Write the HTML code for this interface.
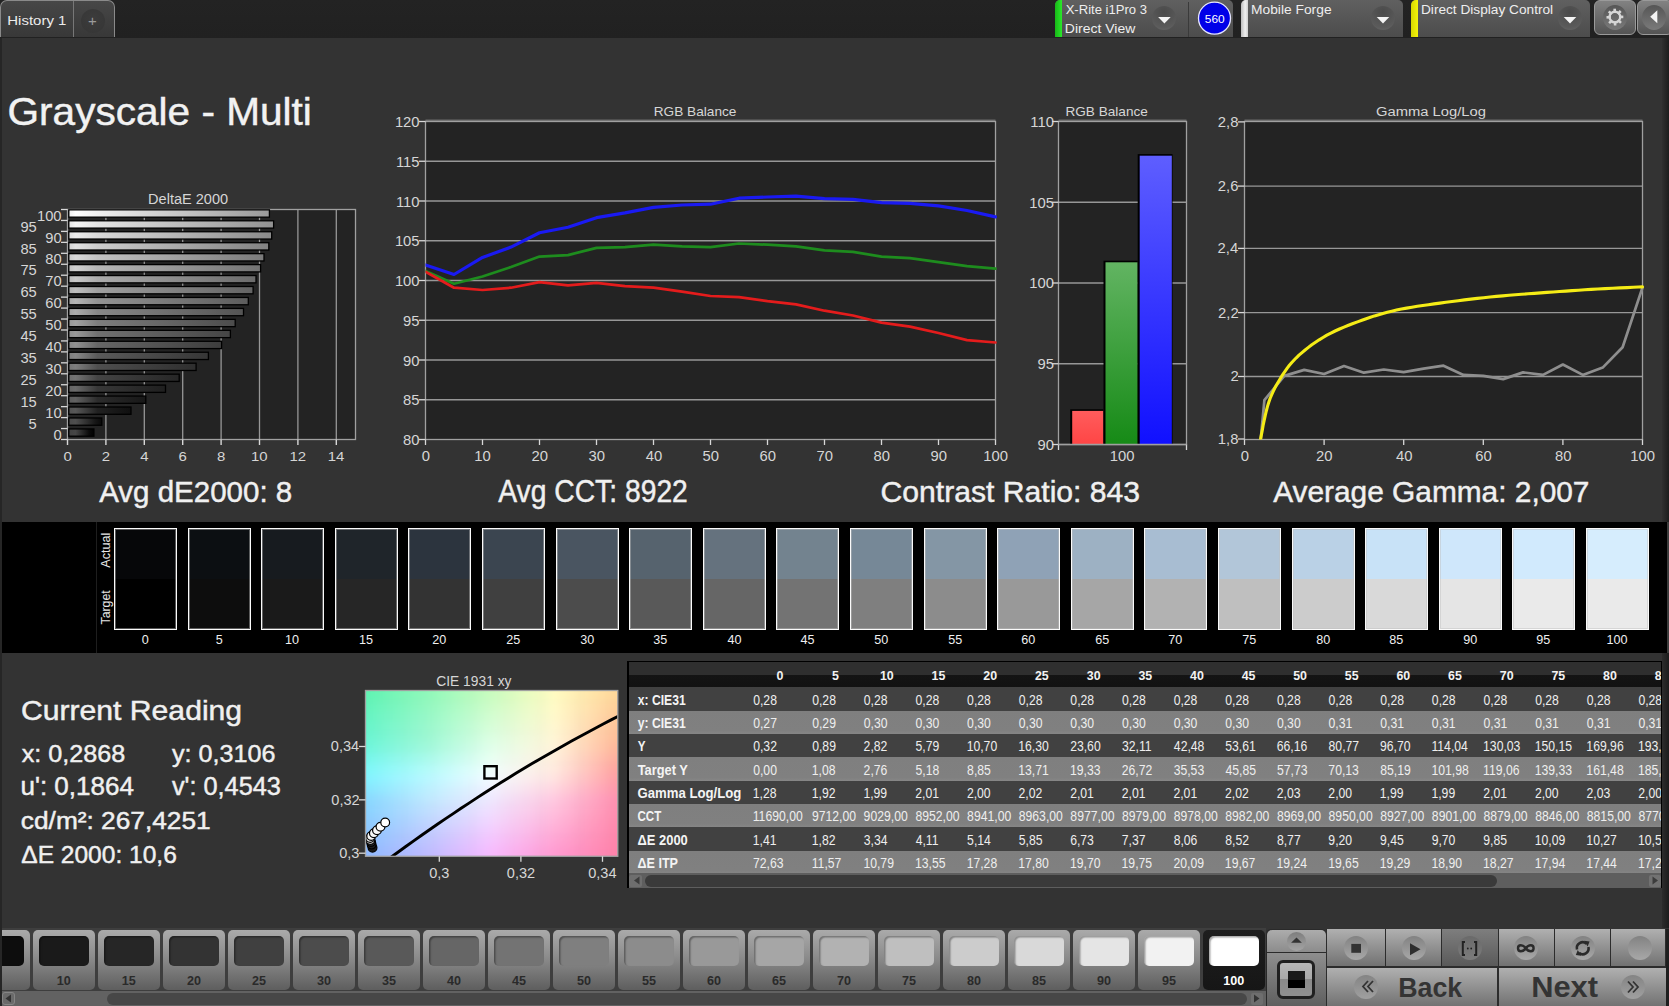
<!DOCTYPE html>
<html><head><meta charset="utf-8">
<style>
html,body{margin:0;padding:0;}
body{width:1669px;height:1006px;overflow:hidden;background:#333333;font-family:"Liberation Sans", sans-serif;position:relative;}
.a{position:absolute;}
svg{position:absolute;left:0;top:0;}
svg text{font-family:"Liberation Sans", sans-serif;}
</style></head><body>
<div class="a" style="left:0;top:0;width:1669px;height:38px;background:linear-gradient(#232323,#212121)"></div><div class="a" style="left:1662px;top:38px;width:7px;height:890px;background:linear-gradient(90deg,#303030,#1d1d1d)"></div><div class="a" style="left:0;top:0;width:115px;height:37px;box-sizing:border-box;border:1px solid #8a8a8a;border-bottom:none;border-radius:7px 7px 0 0;background:linear-gradient(#474747,#383838)"></div><div class="a" style="left:73px;top:1px;width:1px;height:36px;background:#777"></div><div class="a" style="left:81px;top:9px;width:24px;height:24px;border-radius:50%;background:radial-gradient(circle at 50% 40%,#3c3c3c,#353535)"></div><div class="a" style="left:1055px;top:0;width:178px;height:37px;border-radius:5px 5px 0 0;background:linear-gradient(#606060,#4c4c4c)"></div><div class="a" style="left:1055px;top:0;width:7px;height:37px;border-radius:5px 0 0 0;background:linear-gradient(90deg,#18b818,#2ae82a)"></div><div class="a" style="left:1241px;top:0;width:162px;height:37px;border-radius:5px 5px 0 0;background:linear-gradient(#606060,#4c4c4c)"></div><div class="a" style="left:1241px;top:0;width:7px;height:37px;border-radius:5px 0 0 0;background:linear-gradient(90deg,#bdbdbd,#f0f0f0 60%,#cfcfcf)"></div><div class="a" style="left:1411px;top:0;width:179px;height:37px;border-radius:5px 5px 0 0;background:linear-gradient(#606060,#4c4c4c)"></div><div class="a" style="left:1411px;top:0;width:7px;height:37px;border-radius:5px 0 0 0;background:linear-gradient(90deg,#d8d800,#f4f40a)"></div><div class="a" style="left:1188px;top:2px;width:1px;height:35px;background:#3a3a3a"></div><div class="a" style="left:1152.4px;top:6px;width:24px;height:24px;border-radius:50%;background:radial-gradient(circle at 50% 25%,#4a4a4a,#5a5a5a 70%,#6a6a6a)"></div><div class="a" style="left:1371.0px;top:6px;width:24px;height:24px;border-radius:50%;background:radial-gradient(circle at 50% 25%,#4a4a4a,#5a5a5a 70%,#6a6a6a)"></div><div class="a" style="left:1558.0px;top:6px;width:24px;height:24px;border-radius:50%;background:radial-gradient(circle at 50% 25%,#4a4a4a,#5a5a5a 70%,#6a6a6a)"></div><div class="a" style="left:1594px;top:0px;width:42px;height:35px;box-sizing:border-box;border:1px solid #9a9a9a;border-radius:6px;background:linear-gradient(#828282,#545454)"></div><div class="a" style="left:1603px;top:5px;width:24px;height:25px;border-radius:50%;background:linear-gradient(#555,#6c6c6c 60%,#7a7a7a)"></div><div class="a" style="left:1637px;top:0px;width:36px;height:35px;box-sizing:border-box;border:1px solid #9a9a9a;border-radius:6px;background:linear-gradient(#828282,#545454)"></div><div class="a" style="left:1642px;top:5px;width:24px;height:25px;border-radius:50%;background:linear-gradient(#555,#6c6c6c 60%,#7a7a7a)"></div>
<svg width="1669" height="1006" viewBox="0 0 1669 1006"><path d="M1158.1,17 L1170.7,17 L1164.4,23.4 Z" fill="#f4f4f4"/><path d="M1376.7,17 L1389.3,17 L1383.0,23.4 Z" fill="#f4f4f4"/><path d="M1563.7,17 L1576.3,17 L1570.0,23.4 Z" fill="#f4f4f4"/><circle cx="1214.5" cy="18.2" r="16" fill="#0000e8" stroke="#e6e6ff" stroke-width="1.3"/><rect x="1613.40" y="8.70" width="2.6" height="4.2" fill="#d6d6d6" transform="rotate(0 1614.9 17.1)"/><rect x="1613.40" y="8.70" width="2.6" height="4.2" fill="#d6d6d6" transform="rotate(45 1614.9 17.1)"/><rect x="1613.40" y="8.70" width="2.6" height="4.2" fill="#d6d6d6" transform="rotate(90 1614.9 17.1)"/><rect x="1613.40" y="8.70" width="2.6" height="4.2" fill="#d6d6d6" transform="rotate(135 1614.9 17.1)"/><rect x="1613.40" y="8.70" width="2.6" height="4.2" fill="#d6d6d6" transform="rotate(180 1614.9 17.1)"/><rect x="1613.40" y="8.70" width="2.6" height="4.2" fill="#d6d6d6" transform="rotate(225 1614.9 17.1)"/><rect x="1613.40" y="8.70" width="2.6" height="4.2" fill="#d6d6d6" transform="rotate(270 1614.9 17.1)"/><rect x="1613.40" y="8.70" width="2.6" height="4.2" fill="#d6d6d6" transform="rotate(315 1614.9 17.1)"/><circle cx="1614.9" cy="17.1" r="5.3" fill="none" stroke="#d6d6d6" stroke-width="2.4"/><path d="M1657.3,10.2 L1657.3,23.2 L1650.2,16.8 Z" fill="#f4f4f4"/><rect x="67.5" y="209.5" width="288.0" height="230.0" fill="#232323"/><line x1="105.9" y1="209.5" x2="105.9" y2="439.5" stroke="#979797" stroke-width="1.3"/><line x1="144.3" y1="209.5" x2="144.3" y2="439.5" stroke="#979797" stroke-width="1.3"/><line x1="182.7" y1="209.5" x2="182.7" y2="439.5" stroke="#979797" stroke-width="1.3"/><line x1="221.1" y1="209.5" x2="221.1" y2="439.5" stroke="#979797" stroke-width="1.3"/><line x1="259.5" y1="209.5" x2="259.5" y2="439.5" stroke="#979797" stroke-width="1.3"/><line x1="297.9" y1="209.5" x2="297.9" y2="439.5" stroke="#979797" stroke-width="1.3"/><line x1="336.3" y1="209.5" x2="336.3" y2="439.5" stroke="#979797" stroke-width="1.3"/><rect x="67.5" y="209.5" width="288.0" height="230.0" fill="none" stroke="#a0a0a0" stroke-width="1.3"/><rect x="68.8" y="209.85" width="200.6" height="7.3" fill="url(#dg100)" stroke="#000" stroke-width="1.3"/><rect x="68.8" y="220.80" width="204.8" height="7.3" fill="url(#dg95)" stroke="#000" stroke-width="1.3"/><rect x="68.8" y="231.75" width="202.9" height="7.3" fill="url(#dg90)" stroke="#000" stroke-width="1.3"/><rect x="68.8" y="242.71" width="200.0" height="7.3" fill="url(#dg85)" stroke="#000" stroke-width="1.3"/><rect x="68.8" y="253.66" width="195.2" height="7.3" fill="url(#dg80)" stroke="#000" stroke-width="1.3"/><rect x="68.8" y="264.61" width="191.8" height="7.3" fill="url(#dg75)" stroke="#000" stroke-width="1.3"/><rect x="68.8" y="275.56" width="187.2" height="7.3" fill="url(#dg70)" stroke="#000" stroke-width="1.3"/><rect x="68.8" y="286.52" width="184.3" height="7.3" fill="url(#dg65)" stroke="#000" stroke-width="1.3"/><rect x="68.8" y="297.47" width="179.5" height="7.3" fill="url(#dg60)" stroke="#000" stroke-width="1.3"/><rect x="68.8" y="308.42" width="174.7" height="7.3" fill="url(#dg55)" stroke="#000" stroke-width="1.3"/><rect x="68.8" y="319.37" width="166.4" height="7.3" fill="url(#dg50)" stroke="#000" stroke-width="1.3"/><rect x="68.8" y="330.33" width="161.6" height="7.3" fill="url(#dg45)" stroke="#000" stroke-width="1.3"/><rect x="68.8" y="341.28" width="152.8" height="7.3" fill="url(#dg40)" stroke="#000" stroke-width="1.3"/><rect x="68.8" y="352.23" width="139.6" height="7.3" fill="url(#dg35)" stroke="#000" stroke-width="1.3"/><rect x="68.8" y="363.18" width="127.3" height="7.3" fill="url(#dg30)" stroke="#000" stroke-width="1.3"/><rect x="68.8" y="374.14" width="110.4" height="7.3" fill="url(#dg25)" stroke="#000" stroke-width="1.3"/><rect x="68.8" y="385.09" width="96.7" height="7.3" fill="url(#dg20)" stroke="#000" stroke-width="1.3"/><rect x="68.8" y="396.04" width="77.0" height="7.3" fill="url(#dg15)" stroke="#000" stroke-width="1.3"/><rect x="68.8" y="406.99" width="62.2" height="7.3" fill="url(#dg10)" stroke="#000" stroke-width="1.3"/><rect x="68.8" y="417.95" width="33.0" height="7.3" fill="url(#dg5)" stroke="#000" stroke-width="1.3"/><rect x="68.8" y="428.90" width="25.1" height="7.3" fill="url(#dg0)" stroke="#000" stroke-width="1.3"/><defs><linearGradient id="dg100" gradientUnits="userSpaceOnUse" x1="67.5" x2="270.06" y1="0" y2="0"><stop offset="0" stop-color="rgb(235,235,235)"/><stop offset="0.039" stop-color="rgb(255,255,255)"/><stop offset="0.148" stop-color="rgb(240,240,240)"/><stop offset="1" stop-color="rgb(153,153,153)"/></linearGradient><linearGradient id="dg95" gradientUnits="userSpaceOnUse" x1="67.5" x2="274.28" y1="0" y2="0"><stop offset="0" stop-color="rgb(226,226,226)"/><stop offset="0.039" stop-color="rgb(246,246,246)"/><stop offset="0.145" stop-color="rgb(228,228,228)"/><stop offset="1" stop-color="rgb(145,145,145)"/></linearGradient><linearGradient id="dg90" gradientUnits="userSpaceOnUse" x1="67.5" x2="272.36" y1="0" y2="0"><stop offset="0" stop-color="rgb(218,218,218)"/><stop offset="0.039" stop-color="rgb(236,236,236)"/><stop offset="0.146" stop-color="rgb(217,217,217)"/><stop offset="1" stop-color="rgb(138,138,138)"/></linearGradient><linearGradient id="dg85" gradientUnits="userSpaceOnUse" x1="67.5" x2="269.48" y1="0" y2="0"><stop offset="0" stop-color="rgb(209,209,209)"/><stop offset="0.040" stop-color="rgb(227,227,227)"/><stop offset="0.149" stop-color="rgb(205,205,205)"/><stop offset="1" stop-color="rgb(130,130,130)"/></linearGradient><linearGradient id="dg80" gradientUnits="userSpaceOnUse" x1="67.5" x2="264.68" y1="0" y2="0"><stop offset="0" stop-color="rgb(201,201,201)"/><stop offset="0.041" stop-color="rgb(218,218,218)"/><stop offset="0.152" stop-color="rgb(194,194,194)"/><stop offset="1" stop-color="rgb(122,122,122)"/></linearGradient><linearGradient id="dg75" gradientUnits="userSpaceOnUse" x1="67.5" x2="261.23" y1="0" y2="0"><stop offset="0" stop-color="rgb(192,192,192)"/><stop offset="0.041" stop-color="rgb(209,209,209)"/><stop offset="0.155" stop-color="rgb(182,182,182)"/><stop offset="1" stop-color="rgb(115,115,115)"/></linearGradient><linearGradient id="dg70" gradientUnits="userSpaceOnUse" x1="67.5" x2="256.62" y1="0" y2="0"><stop offset="0" stop-color="rgb(184,184,184)"/><stop offset="0.042" stop-color="rgb(200,200,200)"/><stop offset="0.159" stop-color="rgb(171,171,171)"/><stop offset="1" stop-color="rgb(107,107,107)"/></linearGradient><linearGradient id="dg65" gradientUnits="userSpaceOnUse" x1="67.5" x2="253.74" y1="0" y2="0"><stop offset="0" stop-color="rgb(175,175,175)"/><stop offset="0.043" stop-color="rgb(190,190,190)"/><stop offset="0.161" stop-color="rgb(160,160,160)"/><stop offset="1" stop-color="rgb(99,99,99)"/></linearGradient><linearGradient id="dg60" gradientUnits="userSpaceOnUse" x1="67.5" x2="248.94" y1="0" y2="0"><stop offset="0" stop-color="rgb(167,167,167)"/><stop offset="0.044" stop-color="rgb(181,181,181)"/><stop offset="0.165" stop-color="rgb(148,148,148)"/><stop offset="1" stop-color="rgb(92,92,92)"/></linearGradient><linearGradient id="dg55" gradientUnits="userSpaceOnUse" x1="67.5" x2="244.14" y1="0" y2="0"><stop offset="0" stop-color="rgb(158,158,158)"/><stop offset="0.045" stop-color="rgb(172,172,172)"/><stop offset="0.170" stop-color="rgb(136,136,136)"/><stop offset="1" stop-color="rgb(84,84,84)"/></linearGradient><linearGradient id="dg50" gradientUnits="userSpaceOnUse" x1="67.5" x2="235.88" y1="0" y2="0"><stop offset="0" stop-color="rgb(150,150,150)"/><stop offset="0.048" stop-color="rgb(162,162,162)"/><stop offset="0.178" stop-color="rgb(125,125,125)"/><stop offset="1" stop-color="rgb(76,76,76)"/></linearGradient><linearGradient id="dg45" gradientUnits="userSpaceOnUse" x1="67.5" x2="231.08" y1="0" y2="0"><stop offset="0" stop-color="rgb(141,141,141)"/><stop offset="0.049" stop-color="rgb(153,153,153)"/><stop offset="0.183" stop-color="rgb(113,113,113)"/><stop offset="1" stop-color="rgb(69,69,69)"/></linearGradient><linearGradient id="dg40" gradientUnits="userSpaceOnUse" x1="67.5" x2="222.25" y1="0" y2="0"><stop offset="0" stop-color="rgb(132,132,132)"/><stop offset="0.052" stop-color="rgb(144,144,144)"/><stop offset="0.194" stop-color="rgb(102,102,102)"/><stop offset="1" stop-color="rgb(61,61,61)"/></linearGradient><linearGradient id="dg35" gradientUnits="userSpaceOnUse" x1="67.5" x2="209.00" y1="0" y2="0"><stop offset="0" stop-color="rgb(124,124,124)"/><stop offset="0.057" stop-color="rgb(135,135,135)"/><stop offset="0.212" stop-color="rgb(90,90,90)"/><stop offset="1" stop-color="rgb(54,54,54)"/></linearGradient><linearGradient id="dg30" gradientUnits="userSpaceOnUse" x1="67.5" x2="196.72" y1="0" y2="0"><stop offset="0" stop-color="rgb(115,115,115)"/><stop offset="0.062" stop-color="rgb(126,126,126)"/><stop offset="0.232" stop-color="rgb(79,79,79)"/><stop offset="1" stop-color="rgb(46,46,46)"/></linearGradient><linearGradient id="dg25" gradientUnits="userSpaceOnUse" x1="67.5" x2="179.82" y1="0" y2="0"><stop offset="0" stop-color="rgb(107,107,107)"/><stop offset="0.071" stop-color="rgb(116,116,116)"/><stop offset="0.267" stop-color="rgb(68,68,68)"/><stop offset="1" stop-color="rgb(38,38,38)"/></linearGradient><linearGradient id="dg20" gradientUnits="userSpaceOnUse" x1="67.5" x2="166.19" y1="0" y2="0"><stop offset="0" stop-color="rgb(98,98,98)"/><stop offset="0.081" stop-color="rgb(107,107,107)"/><stop offset="0.304" stop-color="rgb(56,56,56)"/><stop offset="1" stop-color="rgb(31,31,31)"/></linearGradient><linearGradient id="dg15" gradientUnits="userSpaceOnUse" x1="67.5" x2="146.41" y1="0" y2="0"><stop offset="0" stop-color="rgb(90,90,90)"/><stop offset="0.101" stop-color="rgb(98,98,98)"/><stop offset="0.380" stop-color="rgb(44,44,44)"/><stop offset="1" stop-color="rgb(23,23,23)"/></linearGradient><linearGradient id="dg10" gradientUnits="userSpaceOnUse" x1="67.5" x2="131.63" y1="0" y2="0"><stop offset="0" stop-color="rgb(81,81,81)"/><stop offset="0.125" stop-color="rgb(88,88,88)"/><stop offset="0.468" stop-color="rgb(33,33,33)"/><stop offset="1" stop-color="rgb(15,15,15)"/></linearGradient><linearGradient id="dg5" gradientUnits="userSpaceOnUse" x1="67.5" x2="102.44" y1="0" y2="0"><stop offset="0" stop-color="rgb(73,73,73)"/><stop offset="0.229" stop-color="rgb(79,79,79)"/><stop offset="0.800" stop-color="rgb(22,22,22)"/><stop offset="1" stop-color="rgb(8,8,8)"/></linearGradient><linearGradient id="dg0" gradientUnits="userSpaceOnUse" x1="67.5" x2="94.57" y1="0" y2="0"><stop offset="0" stop-color="rgb(64,64,64)"/><stop offset="0.296" stop-color="rgb(70,70,70)"/><stop offset="0.800" stop-color="rgb(10,10,10)"/><stop offset="1" stop-color="rgb(0,0,0)"/></linearGradient></defs><line x1="61.0" y1="209.50" x2="67.5" y2="209.50" stroke="#d8d8d8" stroke-width="1.3"/><line x1="61.0" y1="220.45" x2="67.5" y2="220.45" stroke="#d8d8d8" stroke-width="1.3"/><line x1="61.0" y1="231.40" x2="67.5" y2="231.40" stroke="#d8d8d8" stroke-width="1.3"/><line x1="61.0" y1="242.36" x2="67.5" y2="242.36" stroke="#d8d8d8" stroke-width="1.3"/><line x1="61.0" y1="253.31" x2="67.5" y2="253.31" stroke="#d8d8d8" stroke-width="1.3"/><line x1="61.0" y1="264.26" x2="67.5" y2="264.26" stroke="#d8d8d8" stroke-width="1.3"/><line x1="61.0" y1="275.21" x2="67.5" y2="275.21" stroke="#d8d8d8" stroke-width="1.3"/><line x1="61.0" y1="286.17" x2="67.5" y2="286.17" stroke="#d8d8d8" stroke-width="1.3"/><line x1="61.0" y1="297.12" x2="67.5" y2="297.12" stroke="#d8d8d8" stroke-width="1.3"/><line x1="61.0" y1="308.07" x2="67.5" y2="308.07" stroke="#d8d8d8" stroke-width="1.3"/><line x1="61.0" y1="319.02" x2="67.5" y2="319.02" stroke="#d8d8d8" stroke-width="1.3"/><line x1="61.0" y1="329.98" x2="67.5" y2="329.98" stroke="#d8d8d8" stroke-width="1.3"/><line x1="61.0" y1="340.93" x2="67.5" y2="340.93" stroke="#d8d8d8" stroke-width="1.3"/><line x1="61.0" y1="351.88" x2="67.5" y2="351.88" stroke="#d8d8d8" stroke-width="1.3"/><line x1="61.0" y1="362.83" x2="67.5" y2="362.83" stroke="#d8d8d8" stroke-width="1.3"/><line x1="61.0" y1="373.79" x2="67.5" y2="373.79" stroke="#d8d8d8" stroke-width="1.3"/><line x1="61.0" y1="384.74" x2="67.5" y2="384.74" stroke="#d8d8d8" stroke-width="1.3"/><line x1="61.0" y1="395.69" x2="67.5" y2="395.69" stroke="#d8d8d8" stroke-width="1.3"/><line x1="61.0" y1="406.64" x2="67.5" y2="406.64" stroke="#d8d8d8" stroke-width="1.3"/><line x1="61.0" y1="417.60" x2="67.5" y2="417.60" stroke="#d8d8d8" stroke-width="1.3"/><line x1="61.0" y1="428.55" x2="67.5" y2="428.55" stroke="#d8d8d8" stroke-width="1.3"/><line x1="61.0" y1="439.50" x2="67.5" y2="439.50" stroke="#d8d8d8" stroke-width="1.3"/><line x1="67.5" y1="439.5" x2="67.5" y2="445.0" stroke="#d8d8d8" stroke-width="1.4"/><line x1="105.9" y1="439.5" x2="105.9" y2="445.0" stroke="#d8d8d8" stroke-width="1.4"/><line x1="144.3" y1="439.5" x2="144.3" y2="445.0" stroke="#d8d8d8" stroke-width="1.4"/><line x1="182.7" y1="439.5" x2="182.7" y2="445.0" stroke="#d8d8d8" stroke-width="1.4"/><line x1="221.1" y1="439.5" x2="221.1" y2="445.0" stroke="#d8d8d8" stroke-width="1.4"/><line x1="259.5" y1="439.5" x2="259.5" y2="445.0" stroke="#d8d8d8" stroke-width="1.4"/><line x1="297.9" y1="439.5" x2="297.9" y2="445.0" stroke="#d8d8d8" stroke-width="1.4"/><line x1="336.3" y1="439.5" x2="336.3" y2="445.0" stroke="#d8d8d8" stroke-width="1.4"/><rect x="425.5" y="121.5" width="570.0" height="318.0" fill="#232323"/><line x1="425.5" y1="399.75" x2="995.5" y2="399.75" stroke="#979797" stroke-width="1.3"/><line x1="425.5" y1="360.0" x2="995.5" y2="360.0" stroke="#979797" stroke-width="1.3"/><line x1="425.5" y1="320.25" x2="995.5" y2="320.25" stroke="#979797" stroke-width="1.3"/><line x1="425.5" y1="280.5" x2="995.5" y2="280.5" stroke="#979797" stroke-width="1.3"/><line x1="425.5" y1="240.75" x2="995.5" y2="240.75" stroke="#979797" stroke-width="1.3"/><line x1="425.5" y1="201.0" x2="995.5" y2="201.0" stroke="#979797" stroke-width="1.3"/><line x1="425.5" y1="161.25" x2="995.5" y2="161.25" stroke="#979797" stroke-width="1.3"/><rect x="425.5" y="121.5" width="570.0" height="318.0" fill="none" stroke="#a0a0a0" stroke-width="1.3"/><line x1="425.5" y1="120.2" x2="995.5" y2="120.2" stroke="#8a8a8a" stroke-width="1"/><line x1="419.0" y1="439.5" x2="425.5" y2="439.5" stroke="#d8d8d8" stroke-width="1.3"/><line x1="419.0" y1="399.75" x2="425.5" y2="399.75" stroke="#d8d8d8" stroke-width="1.3"/><line x1="419.0" y1="360.0" x2="425.5" y2="360.0" stroke="#d8d8d8" stroke-width="1.3"/><line x1="419.0" y1="320.25" x2="425.5" y2="320.25" stroke="#d8d8d8" stroke-width="1.3"/><line x1="419.0" y1="280.5" x2="425.5" y2="280.5" stroke="#d8d8d8" stroke-width="1.3"/><line x1="419.0" y1="240.75" x2="425.5" y2="240.75" stroke="#d8d8d8" stroke-width="1.3"/><line x1="419.0" y1="201.0" x2="425.5" y2="201.0" stroke="#d8d8d8" stroke-width="1.3"/><line x1="419.0" y1="161.25" x2="425.5" y2="161.25" stroke="#d8d8d8" stroke-width="1.3"/><line x1="419.0" y1="121.5" x2="425.5" y2="121.5" stroke="#d8d8d8" stroke-width="1.3"/><line x1="425.5" y1="439.5" x2="425.5" y2="445.0" stroke="#d8d8d8" stroke-width="1.3"/><line x1="482.5" y1="439.5" x2="482.5" y2="445.0" stroke="#d8d8d8" stroke-width="1.3"/><line x1="539.5" y1="439.5" x2="539.5" y2="445.0" stroke="#d8d8d8" stroke-width="1.3"/><line x1="596.5" y1="439.5" x2="596.5" y2="445.0" stroke="#d8d8d8" stroke-width="1.3"/><line x1="653.5" y1="439.5" x2="653.5" y2="445.0" stroke="#d8d8d8" stroke-width="1.3"/><line x1="710.5" y1="439.5" x2="710.5" y2="445.0" stroke="#d8d8d8" stroke-width="1.3"/><line x1="767.5" y1="439.5" x2="767.5" y2="445.0" stroke="#d8d8d8" stroke-width="1.3"/><line x1="824.5" y1="439.5" x2="824.5" y2="445.0" stroke="#d8d8d8" stroke-width="1.3"/><line x1="881.5" y1="439.5" x2="881.5" y2="445.0" stroke="#d8d8d8" stroke-width="1.3"/><line x1="938.5" y1="439.5" x2="938.5" y2="445.0" stroke="#d8d8d8" stroke-width="1.3"/><line x1="995.5" y1="439.5" x2="995.5" y2="445.0" stroke="#d8d8d8" stroke-width="1.3"/><clipPath id="rclip"><rect x="425.5" y="121.5" width="572.0" height="318.0"/></clipPath><g clip-path="url(#rclip)"><polyline points="425.5,271.0 454.0,283.7 482.5,276.5 511.0,267.0 539.5,256.6 568.0,255.1 596.5,247.9 625.0,247.1 653.5,244.7 682.0,246.3 710.5,247.1 739.0,243.5 767.5,244.7 796.0,246.3 824.5,250.3 853.0,251.9 881.5,256.6 910.0,258.2 938.5,262.2 967.0,266.2 995.5,268.6" fill="none" stroke="#1e8c1e" stroke-width="2.7" stroke-linejoin="round" stroke-linecap="round"/><polyline points="425.5,271.8 454.0,287.7 482.5,290.0 511.0,287.7 539.5,282.1 568.0,285.3 596.5,282.9 625.0,286.1 653.5,287.7 682.0,291.6 710.5,296.0 739.0,297.2 767.5,301.2 796.0,304.4 824.5,310.7 853.0,315.5 881.5,322.6 910.0,326.6 938.5,333.0 967.0,340.1 995.5,342.5" fill="none" stroke="#e41c1c" stroke-width="2.7" stroke-linejoin="round" stroke-linecap="round"/><polyline points="425.5,265.0 454.0,274.5 482.5,257.4 511.0,247.1 539.5,232.8 568.0,227.2 596.5,217.7 625.0,212.9 653.5,207.4 682.0,205.0 710.5,204.2 739.0,198.2 767.5,197.0 796.0,196.2 824.5,198.6 853.0,199.4 881.5,202.6 910.0,203.4 938.5,205.8 967.0,210.5 995.5,216.9" fill="none" stroke="#1a1af2" stroke-width="3.2" stroke-linejoin="round" stroke-linecap="round"/></g><defs><linearGradient id="gg" x1="0" x2="0" y1="0" y2="1"><stop offset="0" stop-color="#62b462"/><stop offset="1" stop-color="#168a16"/></linearGradient><linearGradient id="bg" x1="0" x2="0" y1="0" y2="1"><stop offset="0" stop-color="#5e5eff"/><stop offset="1" stop-color="#1010ff"/></linearGradient><linearGradient id="rg" x1="0" x2="0" y1="0" y2="1"><stop offset="0" stop-color="#ff5c5c"/><stop offset="1" stop-color="#ff4545"/></linearGradient></defs><rect x="1058.5" y="121.5" width="128.0" height="323.0" fill="#232323"/><line x1="1058.5" y1="363.75" x2="1186.5" y2="363.75" stroke="#979797" stroke-width="1.3"/><line x1="1058.5" y1="283.0" x2="1186.5" y2="283.0" stroke="#979797" stroke-width="1.3"/><line x1="1058.5" y1="202.25" x2="1186.5" y2="202.25" stroke="#979797" stroke-width="1.3"/><rect x="1058.5" y="121.5" width="128.0" height="323.0" fill="none" stroke="#a0a0a0" stroke-width="1.3"/><line x1="1058.5" y1="120.2" x2="1186.5" y2="120.2" stroke="#8a8a8a" stroke-width="1"/><line x1="1052.0" y1="444.5" x2="1058.5" y2="444.5" stroke="#d8d8d8" stroke-width="1.3"/><line x1="1052.0" y1="363.75" x2="1058.5" y2="363.75" stroke="#d8d8d8" stroke-width="1.3"/><line x1="1052.0" y1="283.0" x2="1058.5" y2="283.0" stroke="#d8d8d8" stroke-width="1.3"/><line x1="1052.0" y1="202.25" x2="1058.5" y2="202.25" stroke="#d8d8d8" stroke-width="1.3"/><line x1="1052.0" y1="121.5" x2="1058.5" y2="121.5" stroke="#d8d8d8" stroke-width="1.3"/><line x1="1058.5" y1="444.5" x2="1058.5" y2="450.0" stroke="#d8d8d8" stroke-width="1.3"/><line x1="1186.5" y1="444.5" x2="1186.5" y2="450.0" stroke="#d8d8d8" stroke-width="1.3"/><rect x="1070.2" y="409.3" width="33.1" height="35.2" fill="#000"/><rect x="1072.2" y="410.9" width="31.1" height="33.6" fill="url(#rg)"/><rect x="1103.5" y="260.7" width="34.1" height="183.8" fill="#000"/><rect x="1105.5" y="262.3" width="32.1" height="182.2" fill="url(#gg)"/><rect x="1137.7" y="154.1" width="34.8" height="290.4" fill="#000"/><rect x="1139.7" y="155.7" width="32.1" height="288.8" fill="url(#bg)"/><line x1="1058.5" y1="444.5" x2="1186.5" y2="444.5" stroke="#a0a0a0" stroke-width="1.3"/><rect x="1244.5" y="121.5" width="398.0" height="318.0" fill="#232323"/><line x1="1244.5" y1="376.50" x2="1642.5" y2="376.50" stroke="#979797" stroke-width="1.3"/><line x1="1244.5" y1="312.60" x2="1642.5" y2="312.60" stroke="#979797" stroke-width="1.3"/><line x1="1244.5" y1="248.40" x2="1642.5" y2="248.40" stroke="#979797" stroke-width="1.3"/><line x1="1244.5" y1="186.10" x2="1642.5" y2="186.10" stroke="#979797" stroke-width="1.3"/><rect x="1244.5" y="121.5" width="398.0" height="318.0" fill="none" stroke="#a0a0a0" stroke-width="1.3"/><line x1="1244.5" y1="120.2" x2="1642.5" y2="120.2" stroke="#8a8a8a" stroke-width="1"/><line x1="1238.0" y1="439.00" x2="1244.5" y2="439.00" stroke="#d8d8d8" stroke-width="1.3"/><line x1="1238.0" y1="376.50" x2="1244.5" y2="376.50" stroke="#d8d8d8" stroke-width="1.3"/><line x1="1238.0" y1="312.60" x2="1244.5" y2="312.60" stroke="#d8d8d8" stroke-width="1.3"/><line x1="1238.0" y1="248.40" x2="1244.5" y2="248.40" stroke="#d8d8d8" stroke-width="1.3"/><line x1="1238.0" y1="186.10" x2="1244.5" y2="186.10" stroke="#d8d8d8" stroke-width="1.3"/><line x1="1238.0" y1="121.90" x2="1244.5" y2="121.90" stroke="#d8d8d8" stroke-width="1.3"/><line x1="1244.5" y1="439.5" x2="1244.5" y2="445.0" stroke="#d8d8d8" stroke-width="1.3"/><line x1="1324.1" y1="439.5" x2="1324.1" y2="445.0" stroke="#d8d8d8" stroke-width="1.3"/><line x1="1403.7" y1="439.5" x2="1403.7" y2="445.0" stroke="#d8d8d8" stroke-width="1.3"/><line x1="1483.3" y1="439.5" x2="1483.3" y2="445.0" stroke="#d8d8d8" stroke-width="1.3"/><line x1="1562.9" y1="439.5" x2="1562.9" y2="445.0" stroke="#d8d8d8" stroke-width="1.3"/><line x1="1642.5" y1="439.5" x2="1642.5" y2="445.0" stroke="#d8d8d8" stroke-width="1.3"/><clipPath id="gclip"><rect x="1244.5" y="121.5" width="400.0" height="318.0"/></clipPath><g clip-path="url(#gclip)"><polyline points="1260.7,439.5 1264.4,400.1 1284.3,375.9 1304.2,369.9 1324.1,374.0 1344.0,366.0 1363.9,372.7 1383.8,369.5 1403.7,372.1 1423.6,368.6 1443.5,365.7 1463.4,374.9 1483.3,375.9 1503.2,379.1 1523.1,372.4 1543.0,374.9 1562.9,364.5 1582.8,374.9 1602.7,367.6 1622.6,347.3 1642.5,287.5" fill="none" stroke="#8e8e8e" stroke-width="2.7" stroke-linejoin="round" stroke-linecap="round"/><polyline points="1258.8,455.4 1258.9,454.2 1259.0,452.7 1259.2,450.9 1259.3,448.9 1259.5,446.6 1259.9,444.0 1260.3,441.1 1260.8,437.9 1261.5,434.3 1262.3,430.1 1263.1,425.5 1264.1,420.6 1265.2,415.7 1266.3,411.0 1267.5,406.4 1268.8,402.3 1270.1,398.5 1271.6,395.0 1273.1,391.6 1274.7,388.3 1276.3,385.2 1278.1,382.2 1279.9,379.2 1281.7,376.2 1283.6,373.3 1285.5,370.6 1287.4,367.9 1289.4,365.3 1291.6,362.8 1293.9,360.3 1296.3,357.8 1299.0,355.2 1302.0,352.6 1305.1,350.0 1308.4,347.4 1311.8,344.8 1315.5,342.3 1319.2,339.8 1323.0,337.5 1326.9,335.2 1330.9,333.1 1335.1,331.0 1339.5,329.0 1344.0,327.1 1348.5,325.3 1353.0,323.5 1357.5,321.9 1361.9,320.3 1366.2,318.7 1370.4,317.3 1374.5,315.9 1378.7,314.7 1382.9,313.4 1387.3,312.3 1391.8,311.2 1396.5,310.1 1401.5,309.0 1406.6,308.1 1411.9,307.2 1417.3,306.3 1422.8,305.5 1428.4,304.7 1434.1,303.9 1439.9,303.1 1445.9,302.3 1452.0,301.5 1458.2,300.7 1464.5,299.9 1470.9,299.1 1477.3,298.4 1483.7,297.7 1490.1,297.0 1496.4,296.4 1502.7,295.9 1509.0,295.3 1515.3,294.8 1521.6,294.3 1528.0,293.8 1534.3,293.4 1540.6,292.9 1546.9,292.4 1553.2,292.0 1559.5,291.5 1565.8,291.1 1572.1,290.6 1578.5,290.2 1584.8,289.8 1591.2,289.4 1597.9,289.0 1605.1,288.6 1612.6,288.3 1620.0,287.9 1627.0,287.6 1633.3,287.3 1638.5,287.0 1642.5,286.9" fill="none" stroke="#f5ec16" stroke-width="3.1" stroke-linejoin="round" stroke-linecap="round"/></g></svg>
<div class="a" style="left:0;top:522px;width:1669px;height:131px;background:#000"></div><div class="a" style="left:0;top:38px;width:2px;height:890px;background:#262626"></div><div class="a" style="left:96px;top:522px;width:1px;height:131px;background:#1e1e1e"></div><div class="a" style="left:1667px;top:522px;width:2px;height:131px;background:#3c3c3c"></div><div class="a" style="left:114px;top:528px;width:63px;height:102px;box-sizing:border-box;border:1.4px solid #fafafa;box-shadow:inset 0 0 0 1px rgba(190,190,190,0.45);background:linear-gradient(#060709 0,#060709 50%,rgb(0,0,0) 50%)"></div><div class="a" style="left:188px;top:528px;width:63px;height:102px;box-sizing:border-box;border:1.4px solid #fafafa;box-shadow:inset 0 0 0 1px rgba(190,190,190,0.45);background:linear-gradient(#0c0f12 0,#0c0f12 50%,rgb(13,13,13) 50%)"></div><div class="a" style="left:261px;top:528px;width:63px;height:102px;box-sizing:border-box;border:1.4px solid #fafafa;box-shadow:inset 0 0 0 1px rgba(190,190,190,0.45);background:linear-gradient(#171b1f 0,#171b1f 50%,rgb(26,26,26) 50%)"></div><div class="a" style="left:335px;top:528px;width:63px;height:102px;box-sizing:border-box;border:1.4px solid #fafafa;box-shadow:inset 0 0 0 1px rgba(190,190,190,0.45);background:linear-gradient(#1f252a 0,#1f252a 50%,rgb(38,38,38) 50%)"></div><div class="a" style="left:408px;top:528px;width:63px;height:102px;box-sizing:border-box;border:1.4px solid #fafafa;box-shadow:inset 0 0 0 1px rgba(190,190,190,0.45);background:linear-gradient(#2c343e 0,#2c343e 50%,rgb(51,51,51) 50%)"></div><div class="a" style="left:482px;top:528px;width:63px;height:102px;box-sizing:border-box;border:1.4px solid #fafafa;box-shadow:inset 0 0 0 1px rgba(190,190,190,0.45);background:linear-gradient(#3b4550 0,#3b4550 50%,rgb(64,64,64) 50%)"></div><div class="a" style="left:556px;top:528px;width:63px;height:102px;box-sizing:border-box;border:1.4px solid #fafafa;box-shadow:inset 0 0 0 1px rgba(190,190,190,0.45);background:linear-gradient(#4a5561 0,#4a5561 50%,rgb(76,76,76) 50%)"></div><div class="a" style="left:629px;top:528px;width:63px;height:102px;box-sizing:border-box;border:1.4px solid #fafafa;box-shadow:inset 0 0 0 1px rgba(190,190,190,0.45);background:linear-gradient(#56636e 0,#56636e 50%,rgb(89,89,89) 50%)"></div><div class="a" style="left:703px;top:528px;width:63px;height:102px;box-sizing:border-box;border:1.4px solid #fafafa;box-shadow:inset 0 0 0 1px rgba(190,190,190,0.45);background:linear-gradient(#65727e 0,#65727e 50%,rgb(102,102,102) 50%)"></div><div class="a" style="left:776px;top:528px;width:63px;height:102px;box-sizing:border-box;border:1.4px solid #fafafa;box-shadow:inset 0 0 0 1px rgba(190,190,190,0.45);background:linear-gradient(#73838f 0,#73838f 50%,rgb(115,115,115) 50%)"></div><div class="a" style="left:850px;top:528px;width:63px;height:102px;box-sizing:border-box;border:1.4px solid #fafafa;box-shadow:inset 0 0 0 1px rgba(190,190,190,0.45);background:linear-gradient(#768897 0,#768897 50%,rgb(127,127,127) 50%)"></div><div class="a" style="left:924px;top:528px;width:63px;height:102px;box-sizing:border-box;border:1.4px solid #fafafa;box-shadow:inset 0 0 0 1px rgba(190,190,190,0.45);background:linear-gradient(#8496a5 0,#8496a5 50%,rgb(140,140,140) 50%)"></div><div class="a" style="left:997px;top:528px;width:63px;height:102px;box-sizing:border-box;border:1.4px solid #fafafa;box-shadow:inset 0 0 0 1px rgba(190,190,190,0.45);background:linear-gradient(#8fa2b6 0,#8fa2b6 50%,rgb(153,153,153) 50%)"></div><div class="a" style="left:1071px;top:528px;width:63px;height:102px;box-sizing:border-box;border:1.4px solid #fafafa;box-shadow:inset 0 0 0 1px rgba(190,190,190,0.45);background:linear-gradient(#9db1c3 0,#9db1c3 50%,rgb(166,166,166) 50%)"></div><div class="a" style="left:1144px;top:528px;width:63px;height:102px;box-sizing:border-box;border:1.4px solid #fafafa;box-shadow:inset 0 0 0 1px rgba(190,190,190,0.45);background:linear-gradient(#a8bdd2 0,#a8bdd2 50%,rgb(178,178,178) 50%)"></div><div class="a" style="left:1218px;top:528px;width:63px;height:102px;box-sizing:border-box;border:1.4px solid #fafafa;box-shadow:inset 0 0 0 1px rgba(190,190,190,0.45);background:linear-gradient(#b2c6d9 0,#b2c6d9 50%,rgb(191,191,191) 50%)"></div><div class="a" style="left:1292px;top:528px;width:63px;height:102px;box-sizing:border-box;border:1.4px solid #fafafa;box-shadow:inset 0 0 0 1px rgba(190,190,190,0.45);background:linear-gradient(#bad1e6 0,#bad1e6 50%,rgb(204,204,204) 50%)"></div><div class="a" style="left:1365px;top:528px;width:63px;height:102px;box-sizing:border-box;border:1.4px solid #fafafa;box-shadow:inset 0 0 0 1px rgba(190,190,190,0.45);background:linear-gradient(#c8e2f7 0,#c8e2f7 50%,rgb(217,217,217) 50%)"></div><div class="a" style="left:1439px;top:528px;width:63px;height:102px;box-sizing:border-box;border:1.4px solid #fafafa;box-shadow:inset 0 0 0 1px rgba(190,190,190,0.45);background:linear-gradient(#cfe7fb 0,#cfe7fb 50%,rgb(229,229,229) 50%)"></div><div class="a" style="left:1512px;top:528px;width:63px;height:102px;box-sizing:border-box;border:1.4px solid #fafafa;box-shadow:inset 0 0 0 1px rgba(190,190,190,0.45);background:linear-gradient(#d1eafd 0,#d1eafd 50%,rgb(234,234,234) 50%)"></div><div class="a" style="left:1586px;top:528px;width:63px;height:102px;box-sizing:border-box;border:1.4px solid #fafafa;box-shadow:inset 0 0 0 1px rgba(190,190,190,0.45);background:linear-gradient(#d6edfd 0,#d6edfd 50%,rgb(234,234,234) 50%)"></div><div class="a" style="left:627px;top:661px;width:1035px;height:227px;background:#000"></div><div class="a" style="left:1662px;top:653px;width:7px;height:275px;background:linear-gradient(90deg,#2c2c2c,#1c1c1c)"></div><div class="a" style="left:629px;top:662px;width:1032px;height:25.2px;background:linear-gradient(#2f2f2f 0,#2f2f2f 52%,#141414 52%,#121212 100%)"></div><div class="a" style="left:629px;top:687.20px;width:1032px;height:23.44px;background:#414141"></div><div class="a" style="left:629px;top:710.54px;width:1032px;height:23.44px;background:linear-gradient(#7f7f7f,#808080 85%,#868686)"></div><div class="a" style="left:629px;top:733.88px;width:1032px;height:23.44px;background:#414141"></div><div class="a" style="left:629px;top:757.22px;width:1032px;height:23.44px;background:linear-gradient(#7f7f7f,#808080 85%,#868686)"></div><div class="a" style="left:629px;top:780.56px;width:1032px;height:23.44px;background:#414141"></div><div class="a" style="left:629px;top:803.90px;width:1032px;height:23.44px;background:linear-gradient(#7f7f7f,#808080 85%,#868686)"></div><div class="a" style="left:629px;top:827.24px;width:1032px;height:23.44px;background:#414141"></div><div class="a" style="left:629px;top:850.58px;width:1032px;height:23.44px;background:linear-gradient(#7f7f7f,#808080 85%,#868686)"></div><div class="a" style="left:629px;top:873.3px;width:1032px;height:14.7px;background:#5e5e5e"></div><div class="a" style="left:645px;top:874.5px;width:852px;height:12px;border-radius:6px;background:#3a3a3a"></div><div class="a" style="left:629px;top:874.5px;width:13px;height:12px;border-radius:2px;background:#6e6e6e"></div><div class="a" style="left:1649px;top:874.8px;width:11.5px;height:12px;border-radius:2px;background:#727272"></div><div class="a" style="left:0;top:928px;width:1266px;height:63px;background:#3e3e3e"></div><div class="a" style="left:-32.3px;top:929.8px;width:62.4px;height:60.3px;border-radius:5px;background:linear-gradient(#aaaaaa,#8c8c8c 45%,#5e5e5e)"></div><div class="a" style="left:-25.9px;top:935.8px;width:49.6px;height:29.9px;border-radius:5px;background:rgb(13,13,13);box-shadow:inset 1.5px 1.5px 1.5px rgba(0,0,0,0.35)"></div><div class="a" style="left:32.7px;top:929.8px;width:62.4px;height:60.3px;border-radius:5px;background:linear-gradient(#aaaaaa,#8c8c8c 45%,#5e5e5e)"></div><div class="a" style="left:39.1px;top:935.8px;width:49.6px;height:29.9px;border-radius:5px;background:rgb(26,26,26);box-shadow:inset 1.5px 1.5px 1.5px rgba(0,0,0,0.35)"></div><div class="a" style="left:97.7px;top:929.8px;width:62.4px;height:60.3px;border-radius:5px;background:linear-gradient(#aaaaaa,#8c8c8c 45%,#5e5e5e)"></div><div class="a" style="left:104.1px;top:935.8px;width:49.6px;height:29.9px;border-radius:5px;background:rgb(38,38,38);box-shadow:inset 1.5px 1.5px 1.5px rgba(0,0,0,0.35)"></div><div class="a" style="left:162.7px;top:929.8px;width:62.4px;height:60.3px;border-radius:5px;background:linear-gradient(#aaaaaa,#8c8c8c 45%,#5e5e5e)"></div><div class="a" style="left:169.1px;top:935.8px;width:49.6px;height:29.9px;border-radius:5px;background:rgb(51,51,51);box-shadow:inset 1.5px 1.5px 1.5px rgba(0,0,0,0.35)"></div><div class="a" style="left:227.7px;top:929.8px;width:62.4px;height:60.3px;border-radius:5px;background:linear-gradient(#aaaaaa,#8c8c8c 45%,#5e5e5e)"></div><div class="a" style="left:234.1px;top:935.8px;width:49.6px;height:29.9px;border-radius:5px;background:rgb(64,64,64);box-shadow:inset 1.5px 1.5px 1.5px rgba(0,0,0,0.35)"></div><div class="a" style="left:292.7px;top:929.8px;width:62.4px;height:60.3px;border-radius:5px;background:linear-gradient(#aaaaaa,#8c8c8c 45%,#5e5e5e)"></div><div class="a" style="left:299.1px;top:935.8px;width:49.6px;height:29.9px;border-radius:5px;background:rgb(76,76,76);box-shadow:inset 1.5px 1.5px 1.5px rgba(0,0,0,0.35)"></div><div class="a" style="left:357.7px;top:929.8px;width:62.4px;height:60.3px;border-radius:5px;background:linear-gradient(#aaaaaa,#8c8c8c 45%,#5e5e5e)"></div><div class="a" style="left:364.1px;top:935.8px;width:49.6px;height:29.9px;border-radius:5px;background:rgb(89,89,89);box-shadow:inset 1.5px 1.5px 1.5px rgba(0,0,0,0.35)"></div><div class="a" style="left:422.7px;top:929.8px;width:62.4px;height:60.3px;border-radius:5px;background:linear-gradient(#aaaaaa,#8c8c8c 45%,#5e5e5e)"></div><div class="a" style="left:429.1px;top:935.8px;width:49.6px;height:29.9px;border-radius:5px;background:rgb(102,102,102);box-shadow:inset 1.5px 1.5px 1.5px rgba(0,0,0,0.35)"></div><div class="a" style="left:487.7px;top:929.8px;width:62.4px;height:60.3px;border-radius:5px;background:linear-gradient(#aaaaaa,#8c8c8c 45%,#5e5e5e)"></div><div class="a" style="left:494.1px;top:935.8px;width:49.6px;height:29.9px;border-radius:5px;background:rgb(115,115,115);box-shadow:inset 1.5px 1.5px 1.5px rgba(0,0,0,0.35)"></div><div class="a" style="left:552.7px;top:929.8px;width:62.4px;height:60.3px;border-radius:5px;background:linear-gradient(#aaaaaa,#8c8c8c 45%,#5e5e5e)"></div><div class="a" style="left:559.1px;top:935.8px;width:49.6px;height:29.9px;border-radius:5px;background:rgb(127,127,127);box-shadow:inset 1.5px 1.5px 1.5px rgba(0,0,0,0.35)"></div><div class="a" style="left:617.7px;top:929.8px;width:62.4px;height:60.3px;border-radius:5px;background:linear-gradient(#aaaaaa,#8c8c8c 45%,#5e5e5e)"></div><div class="a" style="left:624.1px;top:935.8px;width:49.6px;height:29.9px;border-radius:5px;background:rgb(140,140,140);box-shadow:inset 1.5px 1.5px 1.5px rgba(0,0,0,0.35)"></div><div class="a" style="left:682.7px;top:929.8px;width:62.4px;height:60.3px;border-radius:5px;background:linear-gradient(#aaaaaa,#8c8c8c 45%,#5e5e5e)"></div><div class="a" style="left:689.1px;top:935.8px;width:49.6px;height:29.9px;border-radius:5px;background:rgb(153,153,153);box-shadow:inset 1.5px 1.5px 1.5px rgba(0,0,0,0.35)"></div><div class="a" style="left:747.7px;top:929.8px;width:62.4px;height:60.3px;border-radius:5px;background:linear-gradient(#aaaaaa,#8c8c8c 45%,#5e5e5e)"></div><div class="a" style="left:754.1px;top:935.8px;width:49.6px;height:29.9px;border-radius:5px;background:rgb(166,166,166);box-shadow:inset 1.5px 1.5px 1.5px rgba(0,0,0,0.35)"></div><div class="a" style="left:812.7px;top:929.8px;width:62.4px;height:60.3px;border-radius:5px;background:linear-gradient(#aaaaaa,#8c8c8c 45%,#5e5e5e)"></div><div class="a" style="left:819.1px;top:935.8px;width:49.6px;height:29.9px;border-radius:5px;background:rgb(178,178,178);box-shadow:inset 1.5px 1.5px 1.5px rgba(0,0,0,0.35)"></div><div class="a" style="left:877.7px;top:929.8px;width:62.4px;height:60.3px;border-radius:5px;background:linear-gradient(#aaaaaa,#8c8c8c 45%,#5e5e5e)"></div><div class="a" style="left:884.1px;top:935.8px;width:49.6px;height:29.9px;border-radius:5px;background:rgb(191,191,191);box-shadow:inset 1.5px 1.5px 1.5px rgba(0,0,0,0.35)"></div><div class="a" style="left:942.7px;top:929.8px;width:62.4px;height:60.3px;border-radius:5px;background:linear-gradient(#aaaaaa,#8c8c8c 45%,#5e5e5e)"></div><div class="a" style="left:949.1px;top:935.8px;width:49.6px;height:29.9px;border-radius:5px;background:rgb(204,204,204);box-shadow:inset 1.5px 1.5px 1.5px rgba(0,0,0,0.35)"></div><div class="a" style="left:1007.7px;top:929.8px;width:62.4px;height:60.3px;border-radius:5px;background:linear-gradient(#aaaaaa,#8c8c8c 45%,#5e5e5e)"></div><div class="a" style="left:1014.1px;top:935.8px;width:49.6px;height:29.9px;border-radius:5px;background:rgb(217,217,217);box-shadow:inset 1.5px 1.5px 1.5px rgba(0,0,0,0.35)"></div><div class="a" style="left:1072.7px;top:929.8px;width:62.4px;height:60.3px;border-radius:5px;background:linear-gradient(#aaaaaa,#8c8c8c 45%,#5e5e5e)"></div><div class="a" style="left:1079.1px;top:935.8px;width:49.6px;height:29.9px;border-radius:5px;background:rgb(229,229,229);box-shadow:inset 1.5px 1.5px 1.5px rgba(0,0,0,0.35)"></div><div class="a" style="left:1137.7px;top:929.8px;width:62.4px;height:60.3px;border-radius:5px;background:linear-gradient(#aaaaaa,#8c8c8c 45%,#5e5e5e)"></div><div class="a" style="left:1144.1px;top:935.8px;width:49.6px;height:29.9px;border-radius:5px;background:rgb(242,242,242);box-shadow:inset 1.5px 1.5px 1.5px rgba(0,0,0,0.35)"></div><div class="a" style="left:1202.7px;top:929.8px;width:62.4px;height:60.3px;border-radius:5px;background:linear-gradient(#1e1e1e,#161616)"></div><div class="a" style="left:1209.1px;top:935.8px;width:49.6px;height:29.9px;border-radius:5px;background:rgb(255,255,255);box-shadow:inset 1.5px 1.5px 1.5px rgba(0,0,0,0.35)"></div><div class="a" style="left:0;top:991px;width:1266px;height:15px;background:#626262"></div><div class="a" style="left:107px;top:993px;width:1140px;height:12px;border-radius:6px;background:#474747"></div><div class="a" style="left:2px;top:992px;width:13px;height:13px;box-sizing:border-box;border:1px solid #858585;border-radius:3px;background:#6a6a6a"></div><div class="a" style="left:0;top:928px;width:1.5px;height:78px;background:#262626"></div><div class="a" style="left:1251px;top:992.5px;width:12px;height:12px;border-radius:2px;background:#6e6e6e"></div><div class="a" style="left:1266px;top:929.3px;width:60.2px;height:77px;border-radius:5px 5px 0 0;background:#2a2a2a"></div><div class="a" style="left:1266.5px;top:929.5px;width:59.2px;height:22px;border-radius:5px 5px 0 0;background:linear-gradient(#acacac,#8c8c8c)"></div><div class="a" style="left:1266.5px;top:952.5px;width:59.2px;height:54px;background:linear-gradient(#8e8e8e,#5e5e5e)"></div><div class="a" style="left:1287px;top:931.5px;width:19px;height:19px;border-radius:50%;background:linear-gradient(#7e7e7e,#a4a4a4)"></div><div class="a" style="left:1276.6px;top:960px;width:38.8px;height:38.9px;box-sizing:border-box;border:3.2px solid #202020;border-radius:6px;background:linear-gradient(#b8b8b8 0,#a8a8a8 50%,#8a8a8a 50%,#909090)"></div><div class="a" style="left:1287.9px;top:970.8px;width:17.2px;height:17.3px;background:linear-gradient(#1a1a1a 0,#1a1a1a 50%,#000 50%)"></div><div class="a" style="left:1326.2px;top:928.8px;width:343px;height:77.2px;background:#2c2c2c"></div><div class="a" style="left:1327.3px;top:929.2px;width:57.5px;height:37px;background:linear-gradient(#b0b0b0,#727272)"></div><div class="a" style="left:1343.8px;top:936.3px;width:24px;height:24px;border-radius:50%;background:linear-gradient(#828282,#a8a8a8)"></div><div class="a" style="left:1386.0px;top:929.2px;width:54.8px;height:37px;background:linear-gradient(#b0b0b0,#727272)"></div><div class="a" style="left:1401.5px;top:936.3px;width:24px;height:24px;border-radius:50%;background:linear-gradient(#828282,#a8a8a8)"></div><div class="a" style="left:1442.0px;top:929.2px;width:55.8px;height:37px;background:linear-gradient(#7e7e7e,#5a5a5a)"></div><div class="a" style="left:1457.5px;top:936.3px;width:24px;height:24px;border-radius:50%;background:linear-gradient(#6a6a6a,#7c7c7c)"></div><div class="a" style="left:1499.0px;top:929.2px;width:54.7px;height:37px;background:linear-gradient(#b0b0b0,#727272)"></div><div class="a" style="left:1513.8px;top:936.3px;width:24px;height:24px;border-radius:50%;background:linear-gradient(#828282,#a8a8a8)"></div><div class="a" style="left:1554.9px;top:929.2px;width:54.9px;height:37px;background:linear-gradient(#b0b0b0,#727272)"></div><div class="a" style="left:1570.7px;top:936.3px;width:24px;height:24px;border-radius:50%;background:linear-gradient(#828282,#a8a8a8)"></div><div class="a" style="left:1611.0px;top:929.2px;width:54.2px;height:37px;background:linear-gradient(#b0b0b0,#727272)"></div><div class="a" style="left:1627.6px;top:936.3px;width:24px;height:24px;border-radius:50%;background:linear-gradient(#828282,#a8a8a8)"></div><div class="a" style="left:1666.4px;top:928.8px;width:2.6px;height:77.2px;background:#1e1e1e"></div><div class="a" style="left:1327.3px;top:967.8px;width:170.1px;height:38.2px;background:linear-gradient(#b0b0b0,#727272)"></div><div class="a" style="left:1499px;top:967.8px;width:167.4px;height:38.2px;background:linear-gradient(#b0b0b0,#727272)"></div><div class="a" style="left:1354.1px;top:974.5px;width:24px;height:24px;border-radius:50%;background:linear-gradient(#848484,#a0a0a0)"></div><div class="a" style="left:1620.8px;top:974.7px;width:24px;height:24px;border-radius:50%;background:linear-gradient(#848484,#a0a0a0)"></div>
<svg width="1669" height="1006" viewBox="0 0 1669 1006"><defs><linearGradient id="cieTop" x1="0" y1="0" x2="1" y2="0"><stop offset="0" stop-color="#64f2b0"/><stop offset="0.35" stop-color="#b4f6bc"/><stop offset="0.7" stop-color="#fffcc4"/><stop offset="1" stop-color="#ffd49c"/></linearGradient><linearGradient id="cieBot" x1="0" y1="0" x2="1" y2="0"><stop offset="0" stop-color="#8cb4ff"/><stop offset="0.3" stop-color="#c4bcff"/><stop offset="0.6" stop-color="#f8a8f4"/><stop offset="1" stop-color="#ff7ca8"/></linearGradient><linearGradient id="cieMid" x1="0" y1="0" x2="1" y2="0"><stop offset="0" stop-color="#84f0ff"/><stop offset="0.4" stop-color="#f0ffff"/><stop offset="0.6" stop-color="#ffffff"/><stop offset="1" stop-color="#ffa48c"/></linearGradient><linearGradient id="vTop" x1="0" y1="0" x2="0" y2="1"><stop offset="0" stop-color="#fff"/><stop offset="0.55" stop-color="#000"/></linearGradient><linearGradient id="vBot" x1="0" y1="0" x2="0" y2="1"><stop offset="0.45" stop-color="#000"/><stop offset="1" stop-color="#fff"/></linearGradient><mask id="mTop"><rect x="365.5" y="690.5" width="252.29999999999995" height="165.79999999999995" fill="url(#vTop)"/></mask><mask id="mBot"><rect x="365.5" y="690.5" width="252.29999999999995" height="165.79999999999995" fill="url(#vBot)"/></mask><radialGradient id="cieW" cx="0.5" cy="0.5" r="0.5"><stop offset="0" stop-color="#fff" stop-opacity="0.9"/><stop offset="1" stop-color="#fff" stop-opacity="0"/></radialGradient><clipPath id="cieclip"><rect x="365.5" y="690.5" width="252.29999999999995" height="165.79999999999995"/></clipPath></defs><g clip-path="url(#cieclip)"><filter id="cieblur" x="-10%" y="-10%" width="120%" height="120%"><feGaussianBlur stdDeviation="3.5"/></filter><g filter="url(#cieblur)"><rect x="355.5" y="680.5" width="10.3" height="10.9" fill="#5ff3b0"/><rect x="365.2" y="680.5" width="10.3" height="10.9" fill="#63f3b1"/><rect x="374.9" y="680.5" width="10.3" height="10.9" fill="#6af4b2"/><rect x="384.7" y="680.5" width="10.3" height="10.9" fill="#72f5b3"/><rect x="394.4" y="680.5" width="10.3" height="10.9" fill="#79f6b4"/><rect x="404.1" y="680.5" width="10.3" height="10.9" fill="#81f6b6"/><rect x="413.8" y="680.5" width="10.3" height="10.9" fill="#88f7b7"/><rect x="423.6" y="680.5" width="10.3" height="10.9" fill="#90f8b8"/><rect x="433.3" y="680.5" width="10.3" height="10.9" fill="#99f9b9"/><rect x="443.0" y="680.5" width="10.3" height="10.9" fill="#a1f9b9"/><rect x="452.8" y="680.5" width="10.3" height="10.9" fill="#aafaba"/><rect x="462.5" y="680.5" width="10.3" height="10.9" fill="#b2faba"/><rect x="472.2" y="680.5" width="10.3" height="10.9" fill="#bbfbbb"/><rect x="481.9" y="680.5" width="10.3" height="10.9" fill="#c4fcbc"/><rect x="491.6" y="680.5" width="10.3" height="10.9" fill="#ccfcbc"/><rect x="501.4" y="680.5" width="10.3" height="10.9" fill="#d5fcbd"/><rect x="511.1" y="680.5" width="10.3" height="10.9" fill="#ddfcbe"/><rect x="520.8" y="680.5" width="10.3" height="10.9" fill="#e6fcbe"/><rect x="530.5" y="680.5" width="10.3" height="10.9" fill="#eefcbf"/><rect x="540.3" y="680.5" width="10.3" height="10.9" fill="#f7fcbf"/><rect x="550.0" y="680.5" width="10.3" height="10.9" fill="#fffcc0"/><rect x="559.7" y="680.5" width="10.3" height="10.9" fill="#fff6ba"/><rect x="569.4" y="680.5" width="10.3" height="10.9" fill="#fff1b4"/><rect x="579.2" y="680.5" width="10.3" height="10.9" fill="#ffebad"/><rect x="588.9" y="680.5" width="10.3" height="10.9" fill="#ffe6a7"/><rect x="598.6" y="680.5" width="10.3" height="10.9" fill="#ffe0a1"/><rect x="608.3" y="680.5" width="10.3" height="10.9" fill="#ffdb9b"/><rect x="618.1" y="680.5" width="10.3" height="10.9" fill="#ffd898"/><rect x="355.5" y="690.8" width="10.3" height="10.9" fill="#60f3b4"/><rect x="365.2" y="690.8" width="10.3" height="10.9" fill="#64f4b5"/><rect x="374.9" y="690.8" width="10.3" height="10.9" fill="#6bf4b6"/><rect x="384.7" y="690.8" width="10.3" height="10.9" fill="#73f5b7"/><rect x="394.4" y="690.8" width="10.3" height="10.9" fill="#7bf6b8"/><rect x="404.1" y="690.8" width="10.3" height="10.9" fill="#82f7b9"/><rect x="413.8" y="690.8" width="10.3" height="10.9" fill="#8af7ba"/><rect x="423.6" y="690.8" width="10.3" height="10.9" fill="#91f8bb"/><rect x="433.3" y="690.8" width="10.3" height="10.9" fill="#9af9bc"/><rect x="443.0" y="690.8" width="10.3" height="10.9" fill="#a3f9bd"/><rect x="452.8" y="690.8" width="10.3" height="10.9" fill="#acfabe"/><rect x="462.5" y="690.8" width="10.3" height="10.9" fill="#b5fbbe"/><rect x="472.2" y="690.8" width="10.3" height="10.9" fill="#bdfbbf"/><rect x="481.9" y="690.8" width="10.3" height="10.9" fill="#c6fcc0"/><rect x="491.6" y="690.8" width="10.3" height="10.9" fill="#cefcc1"/><rect x="501.4" y="690.8" width="10.3" height="10.9" fill="#d7fcc1"/><rect x="511.1" y="690.8" width="10.3" height="10.9" fill="#dffcc1"/><rect x="520.8" y="690.8" width="10.3" height="10.9" fill="#e7fcc1"/><rect x="530.5" y="690.8" width="10.3" height="10.9" fill="#effcc2"/><rect x="540.3" y="690.8" width="10.3" height="10.9" fill="#f7fbc2"/><rect x="550.0" y="690.8" width="10.3" height="10.9" fill="#fffbc2"/><rect x="559.7" y="690.8" width="10.3" height="10.9" fill="#fff5bc"/><rect x="569.4" y="690.8" width="10.3" height="10.9" fill="#ffefb5"/><rect x="579.2" y="690.8" width="10.3" height="10.9" fill="#ffe9af"/><rect x="588.9" y="690.8" width="10.3" height="10.9" fill="#ffe3a8"/><rect x="598.6" y="690.8" width="10.3" height="10.9" fill="#ffdea2"/><rect x="608.3" y="690.8" width="10.3" height="10.9" fill="#ffd89b"/><rect x="618.1" y="690.8" width="10.3" height="10.9" fill="#ffd598"/><rect x="355.5" y="701.1" width="10.3" height="10.9" fill="#63f4bc"/><rect x="365.2" y="701.1" width="10.3" height="10.9" fill="#66f4bc"/><rect x="374.9" y="701.1" width="10.3" height="10.9" fill="#6ef5bd"/><rect x="384.7" y="701.1" width="10.3" height="10.9" fill="#76f5be"/><rect x="394.4" y="701.1" width="10.3" height="10.9" fill="#7df6bf"/><rect x="404.1" y="701.1" width="10.3" height="10.9" fill="#85f7bf"/><rect x="413.8" y="701.1" width="10.3" height="10.9" fill="#8df7c0"/><rect x="423.6" y="701.1" width="10.3" height="10.9" fill="#95f8c1"/><rect x="433.3" y="701.1" width="10.3" height="10.9" fill="#9df9c2"/><rect x="443.0" y="701.1" width="10.3" height="10.9" fill="#a6f9c4"/><rect x="452.8" y="701.1" width="10.3" height="10.9" fill="#affac5"/><rect x="462.5" y="701.1" width="10.3" height="10.9" fill="#b8fbc6"/><rect x="472.2" y="701.1" width="10.3" height="10.9" fill="#c1fcc7"/><rect x="481.9" y="701.1" width="10.3" height="10.9" fill="#cafcc8"/><rect x="491.6" y="701.1" width="10.3" height="10.9" fill="#d3fdc9"/><rect x="501.4" y="701.1" width="10.3" height="10.9" fill="#dafcc8"/><rect x="511.1" y="701.1" width="10.3" height="10.9" fill="#e1fcc8"/><rect x="520.8" y="701.1" width="10.3" height="10.9" fill="#e9fbc8"/><rect x="530.5" y="701.1" width="10.3" height="10.9" fill="#f0fbc7"/><rect x="540.3" y="701.1" width="10.3" height="10.9" fill="#f8fac7"/><rect x="550.0" y="701.1" width="10.3" height="10.9" fill="#fffac7"/><rect x="559.7" y="701.1" width="10.3" height="10.9" fill="#fff3c0"/><rect x="569.4" y="701.1" width="10.3" height="10.9" fill="#ffecb8"/><rect x="579.2" y="701.1" width="10.3" height="10.9" fill="#ffe6b1"/><rect x="588.9" y="701.1" width="10.3" height="10.9" fill="#ffdfaa"/><rect x="598.6" y="701.1" width="10.3" height="10.9" fill="#ffd8a3"/><rect x="608.3" y="701.1" width="10.3" height="10.9" fill="#ffd29b"/><rect x="618.1" y="701.1" width="10.3" height="10.9" fill="#ffcf98"/><rect x="355.5" y="711.5" width="10.3" height="10.9" fill="#65f4c3"/><rect x="365.2" y="711.5" width="10.3" height="10.9" fill="#69f4c3"/><rect x="374.9" y="711.5" width="10.3" height="10.9" fill="#71f5c4"/><rect x="384.7" y="711.5" width="10.3" height="10.9" fill="#78f5c5"/><rect x="394.4" y="711.5" width="10.3" height="10.9" fill="#80f6c5"/><rect x="404.1" y="711.5" width="10.3" height="10.9" fill="#88f7c6"/><rect x="413.8" y="711.5" width="10.3" height="10.9" fill="#90f7c7"/><rect x="423.6" y="711.5" width="10.3" height="10.9" fill="#98f8c7"/><rect x="433.3" y="711.5" width="10.3" height="10.9" fill="#a1f9c9"/><rect x="443.0" y="711.5" width="10.3" height="10.9" fill="#aafaca"/><rect x="452.8" y="711.5" width="10.3" height="10.9" fill="#b3fbcc"/><rect x="462.5" y="711.5" width="10.3" height="10.9" fill="#bcfbcd"/><rect x="472.2" y="711.5" width="10.3" height="10.9" fill="#c6fccf"/><rect x="481.9" y="711.5" width="10.3" height="10.9" fill="#cffdd0"/><rect x="491.6" y="711.5" width="10.3" height="10.9" fill="#d7fdd1"/><rect x="501.4" y="711.5" width="10.3" height="10.9" fill="#defcd0"/><rect x="511.1" y="711.5" width="10.3" height="10.9" fill="#e4fbcf"/><rect x="520.8" y="711.5" width="10.3" height="10.9" fill="#ebfbce"/><rect x="530.5" y="711.5" width="10.3" height="10.9" fill="#f2facd"/><rect x="540.3" y="711.5" width="10.3" height="10.9" fill="#f8f9cc"/><rect x="550.0" y="711.5" width="10.3" height="10.9" fill="#fff8cb"/><rect x="559.7" y="711.5" width="10.3" height="10.9" fill="#fff1c3"/><rect x="569.4" y="711.5" width="10.3" height="10.9" fill="#ffe9bb"/><rect x="579.2" y="711.5" width="10.3" height="10.9" fill="#ffe2b4"/><rect x="588.9" y="711.5" width="10.3" height="10.9" fill="#ffdbac"/><rect x="598.6" y="711.5" width="10.3" height="10.9" fill="#ffd3a4"/><rect x="608.3" y="711.5" width="10.3" height="10.9" fill="#ffcc9c"/><rect x="618.1" y="711.5" width="10.3" height="10.9" fill="#ffc998"/><rect x="355.5" y="721.8" width="10.3" height="10.9" fill="#68f4cb"/><rect x="365.2" y="721.8" width="10.3" height="10.9" fill="#6bf5cb"/><rect x="374.9" y="721.8" width="10.3" height="10.9" fill="#73f5cb"/><rect x="384.7" y="721.8" width="10.3" height="10.9" fill="#7bf6cc"/><rect x="394.4" y="721.8" width="10.3" height="10.9" fill="#83f6cc"/><rect x="404.1" y="721.8" width="10.3" height="10.9" fill="#8bf7cc"/><rect x="413.8" y="721.8" width="10.3" height="10.9" fill="#93f7cd"/><rect x="423.6" y="721.8" width="10.3" height="10.9" fill="#9bf8cd"/><rect x="433.3" y="721.8" width="10.3" height="10.9" fill="#a4f9cf"/><rect x="443.0" y="721.8" width="10.3" height="10.9" fill="#adfad1"/><rect x="452.8" y="721.8" width="10.3" height="10.9" fill="#b7fbd3"/><rect x="462.5" y="721.8" width="10.3" height="10.9" fill="#c0fcd5"/><rect x="472.2" y="721.8" width="10.3" height="10.9" fill="#cafdd7"/><rect x="481.9" y="721.8" width="10.3" height="10.9" fill="#d3fed8"/><rect x="491.6" y="721.8" width="10.3" height="10.9" fill="#dbfdd9"/><rect x="501.4" y="721.8" width="10.3" height="10.9" fill="#e1fcd7"/><rect x="511.1" y="721.8" width="10.3" height="10.9" fill="#e7fbd6"/><rect x="520.8" y="721.8" width="10.3" height="10.9" fill="#edfad4"/><rect x="530.5" y="721.8" width="10.3" height="10.9" fill="#f3f9d3"/><rect x="540.3" y="721.8" width="10.3" height="10.9" fill="#f9f8d1"/><rect x="550.0" y="721.8" width="10.3" height="10.9" fill="#fff7d0"/><rect x="559.7" y="721.8" width="10.3" height="10.9" fill="#ffefc7"/><rect x="569.4" y="721.8" width="10.3" height="10.9" fill="#ffe7bf"/><rect x="579.2" y="721.8" width="10.3" height="10.9" fill="#ffdfb6"/><rect x="588.9" y="721.8" width="10.3" height="10.9" fill="#ffd6ad"/><rect x="598.6" y="721.8" width="10.3" height="10.9" fill="#ffcea5"/><rect x="608.3" y="721.8" width="10.3" height="10.9" fill="#ffc69c"/><rect x="618.1" y="721.8" width="10.3" height="10.9" fill="#ffc398"/><rect x="355.5" y="732.1" width="10.3" height="10.9" fill="#6af5d2"/><rect x="365.2" y="732.1" width="10.3" height="10.9" fill="#6ef5d2"/><rect x="374.9" y="732.1" width="10.3" height="10.9" fill="#76f5d2"/><rect x="384.7" y="732.1" width="10.3" height="10.9" fill="#7ef6d3"/><rect x="394.4" y="732.1" width="10.3" height="10.9" fill="#86f6d3"/><rect x="404.1" y="732.1" width="10.3" height="10.9" fill="#8ef7d3"/><rect x="413.8" y="732.1" width="10.3" height="10.9" fill="#96f7d3"/><rect x="423.6" y="732.1" width="10.3" height="10.9" fill="#9ef8d3"/><rect x="433.3" y="732.1" width="10.3" height="10.9" fill="#a7f9d6"/><rect x="443.0" y="732.1" width="10.3" height="10.9" fill="#b1fad8"/><rect x="452.8" y="732.1" width="10.3" height="10.9" fill="#bbfbda"/><rect x="462.5" y="732.1" width="10.3" height="10.9" fill="#c4fcdc"/><rect x="472.2" y="732.1" width="10.3" height="10.9" fill="#cefdde"/><rect x="481.9" y="732.1" width="10.3" height="10.9" fill="#d8fee1"/><rect x="491.6" y="732.1" width="10.3" height="10.9" fill="#dffee1"/><rect x="501.4" y="732.1" width="10.3" height="10.9" fill="#e4fcdf"/><rect x="511.1" y="732.1" width="10.3" height="10.9" fill="#eafbdd"/><rect x="520.8" y="732.1" width="10.3" height="10.9" fill="#eff9db"/><rect x="530.5" y="732.1" width="10.3" height="10.9" fill="#f4f8d9"/><rect x="540.3" y="732.1" width="10.3" height="10.9" fill="#faf7d7"/><rect x="550.0" y="732.1" width="10.3" height="10.9" fill="#fff5d4"/><rect x="559.7" y="732.1" width="10.3" height="10.9" fill="#ffeccb"/><rect x="569.4" y="732.1" width="10.3" height="10.9" fill="#ffe4c2"/><rect x="579.2" y="732.1" width="10.3" height="10.9" fill="#ffdbb8"/><rect x="588.9" y="732.1" width="10.3" height="10.9" fill="#ffd2af"/><rect x="598.6" y="732.1" width="10.3" height="10.9" fill="#ffc9a6"/><rect x="608.3" y="732.1" width="10.3" height="10.9" fill="#ffc19c"/><rect x="618.1" y="732.1" width="10.3" height="10.9" fill="#ffbd98"/><rect x="355.5" y="742.4" width="10.3" height="10.9" fill="#6ef5db"/><rect x="365.2" y="742.4" width="10.3" height="10.9" fill="#71f5db"/><rect x="374.9" y="742.4" width="10.3" height="10.9" fill="#7af6db"/><rect x="384.7" y="742.4" width="10.3" height="10.9" fill="#82f6db"/><rect x="394.4" y="742.4" width="10.3" height="10.9" fill="#8af7db"/><rect x="404.1" y="742.4" width="10.3" height="10.9" fill="#92f7db"/><rect x="413.8" y="742.4" width="10.3" height="10.9" fill="#9af8db"/><rect x="423.6" y="742.4" width="10.3" height="10.9" fill="#a2f8db"/><rect x="433.3" y="742.4" width="10.3" height="10.9" fill="#acf9de"/><rect x="443.0" y="742.4" width="10.3" height="10.9" fill="#b6fae0"/><rect x="452.8" y="742.4" width="10.3" height="10.9" fill="#bffbe2"/><rect x="462.5" y="742.4" width="10.3" height="10.9" fill="#c9fce4"/><rect x="472.2" y="742.4" width="10.3" height="10.9" fill="#d3fde7"/><rect x="481.9" y="742.4" width="10.3" height="10.9" fill="#ddfee9"/><rect x="491.6" y="742.4" width="10.3" height="10.9" fill="#e4fee9"/><rect x="501.4" y="742.4" width="10.3" height="10.9" fill="#e8fce6"/><rect x="511.1" y="742.4" width="10.3" height="10.9" fill="#edfae3"/><rect x="520.8" y="742.4" width="10.3" height="10.9" fill="#f2f9e1"/><rect x="530.5" y="742.4" width="10.3" height="10.9" fill="#f6f7de"/><rect x="540.3" y="742.4" width="10.3" height="10.9" fill="#fbf5db"/><rect x="550.0" y="742.4" width="10.3" height="10.9" fill="#fff3d9"/><rect x="559.7" y="742.4" width="10.3" height="10.9" fill="#ffe9cf"/><rect x="569.4" y="742.4" width="10.3" height="10.9" fill="#ffe0c5"/><rect x="579.2" y="742.4" width="10.3" height="10.9" fill="#ffd7bb"/><rect x="588.9" y="742.4" width="10.3" height="10.9" fill="#ffcdb1"/><rect x="598.6" y="742.4" width="10.3" height="10.9" fill="#ffc4a7"/><rect x="608.3" y="742.4" width="10.3" height="10.9" fill="#ffba9d"/><rect x="618.1" y="742.4" width="10.3" height="10.9" fill="#ffb699"/><rect x="355.5" y="752.8" width="10.3" height="10.9" fill="#75f6ea"/><rect x="365.2" y="752.8" width="10.3" height="10.9" fill="#79f7ea"/><rect x="374.9" y="752.8" width="10.3" height="10.9" fill="#81f7ea"/><rect x="384.7" y="752.8" width="10.3" height="10.9" fill="#8af8ea"/><rect x="394.4" y="752.8" width="10.3" height="10.9" fill="#92f8ea"/><rect x="404.1" y="752.8" width="10.3" height="10.9" fill="#9af9ea"/><rect x="413.8" y="752.8" width="10.3" height="10.9" fill="#a2f9ea"/><rect x="423.6" y="752.8" width="10.3" height="10.9" fill="#abfaea"/><rect x="433.3" y="752.8" width="10.3" height="10.9" fill="#b4fbeb"/><rect x="443.0" y="752.8" width="10.3" height="10.9" fill="#befbec"/><rect x="452.8" y="752.8" width="10.3" height="10.9" fill="#c7fcee"/><rect x="462.5" y="752.8" width="10.3" height="10.9" fill="#d1fdef"/><rect x="472.2" y="752.8" width="10.3" height="10.9" fill="#dbfef0"/><rect x="481.9" y="752.8" width="10.3" height="10.9" fill="#e4fff2"/><rect x="491.6" y="752.8" width="10.3" height="10.9" fill="#ebfef1"/><rect x="501.4" y="752.8" width="10.3" height="10.9" fill="#eefbed"/><rect x="511.1" y="752.8" width="10.3" height="10.9" fill="#f1f9ea"/><rect x="520.8" y="752.8" width="10.3" height="10.9" fill="#f5f6e6"/><rect x="530.5" y="752.8" width="10.3" height="10.9" fill="#f8f4e3"/><rect x="540.3" y="752.8" width="10.3" height="10.9" fill="#fcf1df"/><rect x="550.0" y="752.8" width="10.3" height="10.9" fill="#ffeedb"/><rect x="559.7" y="752.8" width="10.3" height="10.9" fill="#ffe4d2"/><rect x="569.4" y="752.8" width="10.3" height="10.9" fill="#ffdac8"/><rect x="579.2" y="752.8" width="10.3" height="10.9" fill="#ffd0be"/><rect x="588.9" y="752.8" width="10.3" height="10.9" fill="#ffc6b4"/><rect x="598.6" y="752.8" width="10.3" height="10.9" fill="#ffbcaa"/><rect x="608.3" y="752.8" width="10.3" height="10.9" fill="#ffb2a0"/><rect x="618.1" y="752.8" width="10.3" height="10.9" fill="#ffad9c"/><rect x="355.5" y="763.1" width="10.3" height="10.9" fill="#7cf7f8"/><rect x="365.2" y="763.1" width="10.3" height="10.9" fill="#80f8f8"/><rect x="374.9" y="763.1" width="10.3" height="10.9" fill="#89f8f8"/><rect x="384.7" y="763.1" width="10.3" height="10.9" fill="#91f9f8"/><rect x="394.4" y="763.1" width="10.3" height="10.9" fill="#9af9f8"/><rect x="404.1" y="763.1" width="10.3" height="10.9" fill="#a2faf8"/><rect x="413.8" y="763.1" width="10.3" height="10.9" fill="#abfbf8"/><rect x="423.6" y="763.1" width="10.3" height="10.9" fill="#b3fbf8"/><rect x="433.3" y="763.1" width="10.3" height="10.9" fill="#bdfcf8"/><rect x="443.0" y="763.1" width="10.3" height="10.9" fill="#c6fcf9"/><rect x="452.8" y="763.1" width="10.3" height="10.9" fill="#d0fdf9"/><rect x="462.5" y="763.1" width="10.3" height="10.9" fill="#d9fefa"/><rect x="472.2" y="763.1" width="10.3" height="10.9" fill="#e2fefa"/><rect x="481.9" y="763.1" width="10.3" height="10.9" fill="#ecfffb"/><rect x="491.6" y="763.1" width="10.3" height="10.9" fill="#f1fdf9"/><rect x="501.4" y="763.1" width="10.3" height="10.9" fill="#f4faf4"/><rect x="511.1" y="763.1" width="10.3" height="10.9" fill="#f6f7f0"/><rect x="520.8" y="763.1" width="10.3" height="10.9" fill="#f8f4ec"/><rect x="530.5" y="763.1" width="10.3" height="10.9" fill="#fbf1e7"/><rect x="540.3" y="763.1" width="10.3" height="10.9" fill="#fdede3"/><rect x="550.0" y="763.1" width="10.3" height="10.9" fill="#ffeade"/><rect x="559.7" y="763.1" width="10.3" height="10.9" fill="#ffdfd5"/><rect x="569.4" y="763.1" width="10.3" height="10.9" fill="#ffd5cb"/><rect x="579.2" y="763.1" width="10.3" height="10.9" fill="#ffcac1"/><rect x="588.9" y="763.1" width="10.3" height="10.9" fill="#ffbfb7"/><rect x="598.6" y="763.1" width="10.3" height="10.9" fill="#ffb4ad"/><rect x="608.3" y="763.1" width="10.3" height="10.9" fill="#ffa9a3"/><rect x="618.1" y="763.1" width="10.3" height="10.9" fill="#ffa49f"/><rect x="355.5" y="773.4" width="10.3" height="10.9" fill="#82f2ff"/><rect x="365.2" y="773.4" width="10.3" height="10.9" fill="#86f2ff"/><rect x="374.9" y="773.4" width="10.3" height="10.9" fill="#8ef3ff"/><rect x="384.7" y="773.4" width="10.3" height="10.9" fill="#97f4ff"/><rect x="394.4" y="773.4" width="10.3" height="10.9" fill="#a0f5ff"/><rect x="404.1" y="773.4" width="10.3" height="10.9" fill="#a8f6ff"/><rect x="413.8" y="773.4" width="10.3" height="10.9" fill="#b1f7ff"/><rect x="423.6" y="773.4" width="10.3" height="10.9" fill="#b9f8ff"/><rect x="433.3" y="773.4" width="10.3" height="10.9" fill="#c2f8ff"/><rect x="443.0" y="773.4" width="10.3" height="10.9" fill="#cbf9ff"/><rect x="452.8" y="773.4" width="10.3" height="10.9" fill="#d4f9ff"/><rect x="462.5" y="773.4" width="10.3" height="10.9" fill="#ddfaff"/><rect x="472.2" y="773.4" width="10.3" height="10.9" fill="#e6faff"/><rect x="481.9" y="773.4" width="10.3" height="10.9" fill="#effaff"/><rect x="491.6" y="773.4" width="10.3" height="10.9" fill="#f4f9fd"/><rect x="501.4" y="773.4" width="10.3" height="10.9" fill="#f6f5f8"/><rect x="511.1" y="773.4" width="10.3" height="10.9" fill="#f8f1f3"/><rect x="520.8" y="773.4" width="10.3" height="10.9" fill="#faedee"/><rect x="530.5" y="773.4" width="10.3" height="10.9" fill="#fbe9e9"/><rect x="540.3" y="773.4" width="10.3" height="10.9" fill="#fde6e5"/><rect x="550.0" y="773.4" width="10.3" height="10.9" fill="#ffe2e0"/><rect x="559.7" y="773.4" width="10.3" height="10.9" fill="#ffd7d6"/><rect x="569.4" y="773.4" width="10.3" height="10.9" fill="#ffcccd"/><rect x="579.2" y="773.4" width="10.3" height="10.9" fill="#ffc2c4"/><rect x="588.9" y="773.4" width="10.3" height="10.9" fill="#ffb7ba"/><rect x="598.6" y="773.4" width="10.3" height="10.9" fill="#ffadb1"/><rect x="608.3" y="773.4" width="10.3" height="10.9" fill="#ffa2a8"/><rect x="618.1" y="773.4" width="10.3" height="10.9" fill="#ff9da3"/><rect x="355.5" y="783.7" width="10.3" height="10.9" fill="#85e5ff"/><rect x="365.2" y="783.7" width="10.3" height="10.9" fill="#89e6ff"/><rect x="374.9" y="783.7" width="10.3" height="10.9" fill="#91e8ff"/><rect x="384.7" y="783.7" width="10.3" height="10.9" fill="#9aeaff"/><rect x="394.4" y="783.7" width="10.3" height="10.9" fill="#a3ebff"/><rect x="404.1" y="783.7" width="10.3" height="10.9" fill="#abedff"/><rect x="413.8" y="783.7" width="10.3" height="10.9" fill="#b4efff"/><rect x="423.6" y="783.7" width="10.3" height="10.9" fill="#bdf0ff"/><rect x="433.3" y="783.7" width="10.3" height="10.9" fill="#c5f1ff"/><rect x="443.0" y="783.7" width="10.3" height="10.9" fill="#cdf1ff"/><rect x="452.8" y="783.7" width="10.3" height="10.9" fill="#d5f1ff"/><rect x="462.5" y="783.7" width="10.3" height="10.9" fill="#ddf1ff"/><rect x="472.2" y="783.7" width="10.3" height="10.9" fill="#e5f1ff"/><rect x="481.9" y="783.7" width="10.3" height="10.9" fill="#eef1ff"/><rect x="491.6" y="783.7" width="10.3" height="10.9" fill="#f3effd"/><rect x="501.4" y="783.7" width="10.3" height="10.9" fill="#f5ebf8"/><rect x="511.1" y="783.7" width="10.3" height="10.9" fill="#f7e7f3"/><rect x="520.8" y="783.7" width="10.3" height="10.9" fill="#f9e2ee"/><rect x="530.5" y="783.7" width="10.3" height="10.9" fill="#fbdee9"/><rect x="540.3" y="783.7" width="10.3" height="10.9" fill="#fddae5"/><rect x="550.0" y="783.7" width="10.3" height="10.9" fill="#ffd5e0"/><rect x="559.7" y="783.7" width="10.3" height="10.9" fill="#ffccd7"/><rect x="569.4" y="783.7" width="10.3" height="10.9" fill="#ffc2cf"/><rect x="579.2" y="783.7" width="10.3" height="10.9" fill="#ffb8c7"/><rect x="588.9" y="783.7" width="10.3" height="10.9" fill="#ffafbe"/><rect x="598.6" y="783.7" width="10.3" height="10.9" fill="#ffa5b6"/><rect x="608.3" y="783.7" width="10.3" height="10.9" fill="#ff9bad"/><rect x="618.1" y="783.7" width="10.3" height="10.9" fill="#ff97a9"/><rect x="355.5" y="794.0" width="10.3" height="10.9" fill="#88d9ff"/><rect x="365.2" y="794.0" width="10.3" height="10.9" fill="#8cdaff"/><rect x="374.9" y="794.0" width="10.3" height="10.9" fill="#94dcff"/><rect x="384.7" y="794.0" width="10.3" height="10.9" fill="#9ddfff"/><rect x="394.4" y="794.0" width="10.3" height="10.9" fill="#a6e1ff"/><rect x="404.1" y="794.0" width="10.3" height="10.9" fill="#aee4ff"/><rect x="413.8" y="794.0" width="10.3" height="10.9" fill="#b7e6ff"/><rect x="423.6" y="794.0" width="10.3" height="10.9" fill="#c0e9ff"/><rect x="433.3" y="794.0" width="10.3" height="10.9" fill="#c7e9ff"/><rect x="443.0" y="794.0" width="10.3" height="10.9" fill="#cfe9ff"/><rect x="452.8" y="794.0" width="10.3" height="10.9" fill="#d6e9ff"/><rect x="462.5" y="794.0" width="10.3" height="10.9" fill="#dde9ff"/><rect x="472.2" y="794.0" width="10.3" height="10.9" fill="#e5e9ff"/><rect x="481.9" y="794.0" width="10.3" height="10.9" fill="#ece9ff"/><rect x="491.6" y="794.0" width="10.3" height="10.9" fill="#f1e6fd"/><rect x="501.4" y="794.0" width="10.3" height="10.9" fill="#f4e1f8"/><rect x="511.1" y="794.0" width="10.3" height="10.9" fill="#f6dcf3"/><rect x="520.8" y="794.0" width="10.3" height="10.9" fill="#f8d7ee"/><rect x="530.5" y="794.0" width="10.3" height="10.9" fill="#fad3e9"/><rect x="540.3" y="794.0" width="10.3" height="10.9" fill="#fdcee5"/><rect x="550.0" y="794.0" width="10.3" height="10.9" fill="#ffc9e0"/><rect x="559.7" y="794.0" width="10.3" height="10.9" fill="#ffc0d8"/><rect x="569.4" y="794.0" width="10.3" height="10.9" fill="#ffb7d1"/><rect x="579.2" y="794.0" width="10.3" height="10.9" fill="#ffafc9"/><rect x="588.9" y="794.0" width="10.3" height="10.9" fill="#ffa6c2"/><rect x="598.6" y="794.0" width="10.3" height="10.9" fill="#ff9dbb"/><rect x="608.3" y="794.0" width="10.3" height="10.9" fill="#ff95b3"/><rect x="618.1" y="794.0" width="10.3" height="10.9" fill="#ff90b0"/><rect x="355.5" y="804.4" width="10.3" height="10.9" fill="#89d3ff"/><rect x="365.2" y="804.4" width="10.3" height="10.9" fill="#8dd4ff"/><rect x="374.9" y="804.4" width="10.3" height="10.9" fill="#96d6ff"/><rect x="384.7" y="804.4" width="10.3" height="10.9" fill="#9ed8ff"/><rect x="394.4" y="804.4" width="10.3" height="10.9" fill="#a7daff"/><rect x="404.1" y="804.4" width="10.3" height="10.9" fill="#afdcff"/><rect x="413.8" y="804.4" width="10.3" height="10.9" fill="#b7deff"/><rect x="423.6" y="804.4" width="10.3" height="10.9" fill="#c0e0ff"/><rect x="433.3" y="804.4" width="10.3" height="10.9" fill="#c8e0ff"/><rect x="443.0" y="804.4" width="10.3" height="10.9" fill="#cfe0ff"/><rect x="452.8" y="804.4" width="10.3" height="10.9" fill="#d7e0ff"/><rect x="462.5" y="804.4" width="10.3" height="10.9" fill="#dee0ff"/><rect x="472.2" y="804.4" width="10.3" height="10.9" fill="#e6e0ff"/><rect x="481.9" y="804.4" width="10.3" height="10.9" fill="#eee0ff"/><rect x="491.6" y="804.4" width="10.3" height="10.9" fill="#f2ddfc"/><rect x="501.4" y="804.4" width="10.3" height="10.9" fill="#f5d8f7"/><rect x="511.1" y="804.4" width="10.3" height="10.9" fill="#f7d3f2"/><rect x="520.8" y="804.4" width="10.3" height="10.9" fill="#f9cfed"/><rect x="530.5" y="804.4" width="10.3" height="10.9" fill="#fbcae8"/><rect x="540.3" y="804.4" width="10.3" height="10.9" fill="#fdc5e2"/><rect x="550.0" y="804.4" width="10.3" height="10.9" fill="#ffc0dd"/><rect x="559.7" y="804.4" width="10.3" height="10.9" fill="#ffb8d6"/><rect x="569.4" y="804.4" width="10.3" height="10.9" fill="#ffb0cf"/><rect x="579.2" y="804.4" width="10.3" height="10.9" fill="#ffa8c8"/><rect x="588.9" y="804.4" width="10.3" height="10.9" fill="#ffa1c0"/><rect x="598.6" y="804.4" width="10.3" height="10.9" fill="#ff99b9"/><rect x="608.3" y="804.4" width="10.3" height="10.9" fill="#ff91b2"/><rect x="618.1" y="804.4" width="10.3" height="10.9" fill="#ff8daf"/><rect x="355.5" y="814.7" width="10.3" height="10.9" fill="#8bcdff"/><rect x="365.2" y="814.7" width="10.3" height="10.9" fill="#8fcdff"/><rect x="374.9" y="814.7" width="10.3" height="10.9" fill="#97cfff"/><rect x="384.7" y="814.7" width="10.3" height="10.9" fill="#9fd1ff"/><rect x="394.4" y="814.7" width="10.3" height="10.9" fill="#a7d2ff"/><rect x="404.1" y="814.7" width="10.3" height="10.9" fill="#afd4ff"/><rect x="413.8" y="814.7" width="10.3" height="10.9" fill="#b8d5ff"/><rect x="423.6" y="814.7" width="10.3" height="10.9" fill="#c0d7ff"/><rect x="433.3" y="814.7" width="10.3" height="10.9" fill="#c8d7ff"/><rect x="443.0" y="814.7" width="10.3" height="10.9" fill="#d0d7ff"/><rect x="452.8" y="814.7" width="10.3" height="10.9" fill="#d7d7ff"/><rect x="462.5" y="814.7" width="10.3" height="10.9" fill="#dfd7ff"/><rect x="472.2" y="814.7" width="10.3" height="10.9" fill="#e7d7ff"/><rect x="481.9" y="814.7" width="10.3" height="10.9" fill="#efd7ff"/><rect x="491.6" y="814.7" width="10.3" height="10.9" fill="#f4d5fc"/><rect x="501.4" y="814.7" width="10.3" height="10.9" fill="#f6d0f7"/><rect x="511.1" y="814.7" width="10.3" height="10.9" fill="#f8cbf1"/><rect x="520.8" y="814.7" width="10.3" height="10.9" fill="#f9c6eb"/><rect x="530.5" y="814.7" width="10.3" height="10.9" fill="#fbc1e6"/><rect x="540.3" y="814.7" width="10.3" height="10.9" fill="#fdbce0"/><rect x="550.0" y="814.7" width="10.3" height="10.9" fill="#ffb7da"/><rect x="559.7" y="814.7" width="10.3" height="10.9" fill="#ffb0d3"/><rect x="569.4" y="814.7" width="10.3" height="10.9" fill="#ffa9cc"/><rect x="579.2" y="814.7" width="10.3" height="10.9" fill="#ffa2c5"/><rect x="588.9" y="814.7" width="10.3" height="10.9" fill="#ff9bbe"/><rect x="598.6" y="814.7" width="10.3" height="10.9" fill="#ff94b7"/><rect x="608.3" y="814.7" width="10.3" height="10.9" fill="#ff8eb0"/><rect x="618.1" y="814.7" width="10.3" height="10.9" fill="#ff8aad"/><rect x="355.5" y="825.0" width="10.3" height="10.9" fill="#8cc7ff"/><rect x="365.2" y="825.0" width="10.3" height="10.9" fill="#90c7ff"/><rect x="374.9" y="825.0" width="10.3" height="10.9" fill="#98c9ff"/><rect x="384.7" y="825.0" width="10.3" height="10.9" fill="#a0caff"/><rect x="394.4" y="825.0" width="10.3" height="10.9" fill="#a8cbff"/><rect x="404.1" y="825.0" width="10.3" height="10.9" fill="#b0ccff"/><rect x="413.8" y="825.0" width="10.3" height="10.9" fill="#b8cdff"/><rect x="423.6" y="825.0" width="10.3" height="10.9" fill="#c0ceff"/><rect x="433.3" y="825.0" width="10.3" height="10.9" fill="#c8ceff"/><rect x="443.0" y="825.0" width="10.3" height="10.9" fill="#d0ceff"/><rect x="452.8" y="825.0" width="10.3" height="10.9" fill="#d8ceff"/><rect x="462.5" y="825.0" width="10.3" height="10.9" fill="#e0ceff"/><rect x="472.2" y="825.0" width="10.3" height="10.9" fill="#e8ceff"/><rect x="481.9" y="825.0" width="10.3" height="10.9" fill="#f0ceff"/><rect x="491.6" y="825.0" width="10.3" height="10.9" fill="#f5ccfc"/><rect x="501.4" y="825.0" width="10.3" height="10.9" fill="#f7c7f6"/><rect x="511.1" y="825.0" width="10.3" height="10.9" fill="#f8c2f0"/><rect x="520.8" y="825.0" width="10.3" height="10.9" fill="#fabdea"/><rect x="530.5" y="825.0" width="10.3" height="10.9" fill="#fcb8e4"/><rect x="540.3" y="825.0" width="10.3" height="10.9" fill="#fdb3dd"/><rect x="550.0" y="825.0" width="10.3" height="10.9" fill="#ffaed7"/><rect x="559.7" y="825.0" width="10.3" height="10.9" fill="#ffa8d1"/><rect x="569.4" y="825.0" width="10.3" height="10.9" fill="#ffa2ca"/><rect x="579.2" y="825.0" width="10.3" height="10.9" fill="#ff9cc3"/><rect x="588.9" y="825.0" width="10.3" height="10.9" fill="#ff96bc"/><rect x="598.6" y="825.0" width="10.3" height="10.9" fill="#ff90b6"/><rect x="608.3" y="825.0" width="10.3" height="10.9" fill="#ff8aaf"/><rect x="618.1" y="825.0" width="10.3" height="10.9" fill="#ff87ac"/><rect x="355.5" y="835.3" width="10.3" height="10.9" fill="#8ec1ff"/><rect x="365.2" y="835.3" width="10.3" height="10.9" fill="#91c1ff"/><rect x="374.9" y="835.3" width="10.3" height="10.9" fill="#99c2ff"/><rect x="384.7" y="835.3" width="10.3" height="10.9" fill="#a1c3ff"/><rect x="394.4" y="835.3" width="10.3" height="10.9" fill="#a9c3ff"/><rect x="404.1" y="835.3" width="10.3" height="10.9" fill="#b0c4ff"/><rect x="413.8" y="835.3" width="10.3" height="10.9" fill="#b8c5ff"/><rect x="423.6" y="835.3" width="10.3" height="10.9" fill="#c0c5ff"/><rect x="433.3" y="835.3" width="10.3" height="10.9" fill="#c8c5ff"/><rect x="443.0" y="835.3" width="10.3" height="10.9" fill="#d0c5ff"/><rect x="452.8" y="835.3" width="10.3" height="10.9" fill="#d9c5ff"/><rect x="462.5" y="835.3" width="10.3" height="10.9" fill="#e1c5ff"/><rect x="472.2" y="835.3" width="10.3" height="10.9" fill="#e9c5ff"/><rect x="481.9" y="835.3" width="10.3" height="10.9" fill="#f2c5ff"/><rect x="491.6" y="835.3" width="10.3" height="10.9" fill="#f6c3fc"/><rect x="501.4" y="835.3" width="10.3" height="10.9" fill="#f8bef5"/><rect x="511.1" y="835.3" width="10.3" height="10.9" fill="#f9b9ef"/><rect x="520.8" y="835.3" width="10.3" height="10.9" fill="#fbb4e8"/><rect x="530.5" y="835.3" width="10.3" height="10.9" fill="#fcafe2"/><rect x="540.3" y="835.3" width="10.3" height="10.9" fill="#feaadb"/><rect x="550.0" y="835.3" width="10.3" height="10.9" fill="#ffa5d4"/><rect x="559.7" y="835.3" width="10.3" height="10.9" fill="#ffa0ce"/><rect x="569.4" y="835.3" width="10.3" height="10.9" fill="#ff9bc7"/><rect x="579.2" y="835.3" width="10.3" height="10.9" fill="#ff96c1"/><rect x="588.9" y="835.3" width="10.3" height="10.9" fill="#ff91ba"/><rect x="598.6" y="835.3" width="10.3" height="10.9" fill="#ff8cb4"/><rect x="608.3" y="835.3" width="10.3" height="10.9" fill="#ff87ad"/><rect x="618.1" y="835.3" width="10.3" height="10.9" fill="#ff84aa"/><rect x="355.5" y="845.7" width="10.3" height="10.9" fill="#8fbbff"/><rect x="365.2" y="845.7" width="10.3" height="10.9" fill="#93bbff"/><rect x="374.9" y="845.7" width="10.3" height="10.9" fill="#9abbff"/><rect x="384.7" y="845.7" width="10.3" height="10.9" fill="#a2bcff"/><rect x="394.4" y="845.7" width="10.3" height="10.9" fill="#a9bcff"/><rect x="404.1" y="845.7" width="10.3" height="10.9" fill="#b1bcff"/><rect x="413.8" y="845.7" width="10.3" height="10.9" fill="#b8bcff"/><rect x="423.6" y="845.7" width="10.3" height="10.9" fill="#c0bdff"/><rect x="433.3" y="845.7" width="10.3" height="10.9" fill="#c8bdff"/><rect x="443.0" y="845.7" width="10.3" height="10.9" fill="#d1bdff"/><rect x="452.8" y="845.7" width="10.3" height="10.9" fill="#d9bdff"/><rect x="462.5" y="845.7" width="10.3" height="10.9" fill="#e2bdff"/><rect x="472.2" y="845.7" width="10.3" height="10.9" fill="#eabdff"/><rect x="481.9" y="845.7" width="10.3" height="10.9" fill="#f3bdff"/><rect x="491.6" y="845.7" width="10.3" height="10.9" fill="#f8bafb"/><rect x="501.4" y="845.7" width="10.3" height="10.9" fill="#f9b5f4"/><rect x="511.1" y="845.7" width="10.3" height="10.9" fill="#fab0ed"/><rect x="520.8" y="845.7" width="10.3" height="10.9" fill="#fbabe6"/><rect x="530.5" y="845.7" width="10.3" height="10.9" fill="#fda6df"/><rect x="540.3" y="845.7" width="10.3" height="10.9" fill="#fea2d8"/><rect x="550.0" y="845.7" width="10.3" height="10.9" fill="#ff9dd1"/><rect x="559.7" y="845.7" width="10.3" height="10.9" fill="#ff98cb"/><rect x="569.4" y="845.7" width="10.3" height="10.9" fill="#ff94c5"/><rect x="579.2" y="845.7" width="10.3" height="10.9" fill="#ff90bf"/><rect x="588.9" y="845.7" width="10.3" height="10.9" fill="#ff8cb8"/><rect x="598.6" y="845.7" width="10.3" height="10.9" fill="#ff88b2"/><rect x="608.3" y="845.7" width="10.3" height="10.9" fill="#ff84ac"/><rect x="618.1" y="845.7" width="10.3" height="10.9" fill="#ff82a9"/><rect x="355.5" y="856.0" width="10.3" height="10.9" fill="#90b8ff"/><rect x="365.2" y="856.0" width="10.3" height="10.9" fill="#93b8ff"/><rect x="374.9" y="856.0" width="10.3" height="10.9" fill="#9bb8ff"/><rect x="384.7" y="856.0" width="10.3" height="10.9" fill="#a2b8ff"/><rect x="394.4" y="856.0" width="10.3" height="10.9" fill="#aab8ff"/><rect x="404.1" y="856.0" width="10.3" height="10.9" fill="#b1b8ff"/><rect x="413.8" y="856.0" width="10.3" height="10.9" fill="#b8b8ff"/><rect x="423.6" y="856.0" width="10.3" height="10.9" fill="#c0b8ff"/><rect x="433.3" y="856.0" width="10.3" height="10.9" fill="#c9b8ff"/><rect x="443.0" y="856.0" width="10.3" height="10.9" fill="#d1b8ff"/><rect x="452.8" y="856.0" width="10.3" height="10.9" fill="#dab8ff"/><rect x="462.5" y="856.0" width="10.3" height="10.9" fill="#e2b8ff"/><rect x="472.2" y="856.0" width="10.3" height="10.9" fill="#ebb8ff"/><rect x="481.9" y="856.0" width="10.3" height="10.9" fill="#f4b8ff"/><rect x="491.6" y="856.0" width="10.3" height="10.9" fill="#f9b6fb"/><rect x="501.4" y="856.0" width="10.3" height="10.9" fill="#fab1f4"/><rect x="511.1" y="856.0" width="10.3" height="10.9" fill="#fbaced"/><rect x="520.8" y="856.0" width="10.3" height="10.9" fill="#fca7e6"/><rect x="530.5" y="856.0" width="10.3" height="10.9" fill="#fda2de"/><rect x="540.3" y="856.0" width="10.3" height="10.9" fill="#fe9dd7"/><rect x="550.0" y="856.0" width="10.3" height="10.9" fill="#ff98d0"/><rect x="559.7" y="856.0" width="10.3" height="10.9" fill="#ff94ca"/><rect x="569.4" y="856.0" width="10.3" height="10.9" fill="#ff91c4"/><rect x="579.2" y="856.0" width="10.3" height="10.9" fill="#ff8dbd"/><rect x="588.9" y="856.0" width="10.3" height="10.9" fill="#ff89b7"/><rect x="598.6" y="856.0" width="10.3" height="10.9" fill="#ff85b1"/><rect x="608.3" y="856.0" width="10.3" height="10.9" fill="#ff82ab"/><rect x="618.1" y="856.0" width="10.3" height="10.9" fill="#ff80a8"/></g><path d="M390.0,858.0 L397.9,852.3 L405.8,846.5 L413.7,840.9 L421.6,835.3 L429.5,829.8 L437.4,824.3 L445.3,818.9 L453.2,813.6 L461.1,808.3 L469.0,803.1 L476.9,797.9 L484.8,792.8 L492.7,787.8 L500.6,782.8 L508.4,777.9 L516.3,773.1 L524.2,768.3 L532.1,763.6 L540.0,759.0 L547.9,754.4 L555.8,749.9 L563.7,745.4 L571.6,741.0 L579.5,736.7 L587.4,732.4 L595.3,728.2 L603.2,724.0 L611.1,719.9 L619.0,715.9" fill="none" stroke="#000" stroke-width="2.9" stroke-linejoin="round"/><rect x="484.4" y="766.2" width="12.3" height="12.3" fill="none" stroke="#000" stroke-width="2.4"/><circle cx="372.5" cy="847.7" r="4.4" fill="#1a1a1a" stroke="#000" stroke-width="1.2"/><circle cx="371.6" cy="844.6" r="4.4" fill="#1e1e1e" stroke="#000" stroke-width="1.2"/><circle cx="371" cy="842" r="4.4" fill="#2a2a2a" stroke="#000" stroke-width="1.2"/><circle cx="370.4" cy="840" r="4.4" fill="#e8e8e8" stroke="#000" stroke-width="1.2"/><circle cx="370.2" cy="838" r="4.4" fill="#f0f0f0" stroke="#000" stroke-width="1.2"/><circle cx="371.2" cy="836" r="4.4" fill="#f4f4f4" stroke="#000" stroke-width="1.2"/><circle cx="373.9" cy="833.3" r="4.4" fill="#f6f6f6" stroke="#000" stroke-width="1.2"/><circle cx="377" cy="830.3" r="4.4" fill="#f8f8f8" stroke="#000" stroke-width="1.2"/><circle cx="380.5" cy="826.8" r="4.4" fill="#fafafa" stroke="#000" stroke-width="1.2"/><circle cx="385.2" cy="822.5" r="4.4" fill="#ffffff" stroke="#000" stroke-width="1.2"/></g><rect x="365.5" y="690.5" width="252.29999999999995" height="165.79999999999995" fill="none" stroke="#a0a0a0" stroke-width="1.3"/><line x1="359.0" y1="853.20" x2="365.5" y2="853.20" stroke="#d8d8d8" stroke-width="1.3"/><line x1="439.30" y1="856.3" x2="439.30" y2="861.8" stroke="#d8d8d8" stroke-width="1.3"/><line x1="359.0" y1="799.85" x2="365.5" y2="799.85" stroke="#d8d8d8" stroke-width="1.3"/><line x1="520.90" y1="856.3" x2="520.90" y2="861.8" stroke="#d8d8d8" stroke-width="1.3"/><line x1="359.0" y1="746.50" x2="365.5" y2="746.50" stroke="#d8d8d8" stroke-width="1.3"/><line x1="602.50" y1="856.3" x2="602.50" y2="861.8" stroke="#d8d8d8" stroke-width="1.3"/><path d="M639.5,876.5 L639.5,884.5 L634,880.5 Z" fill="#3c3c3c"/><path d="M1652.5,876.5 L1652.5,884.5 L1658,880.5 Z" fill="#3c3c3c"/><defs><clipPath id="tclip"><rect x="629" y="661" width="1032" height="227"/></clipPath></defs><path d="M11,994.5 L11,1002.5 L5.5,998.5 Z" fill="#333"/><path d="M1254,994.5 L1254,1002.5 L1259.5,998.5 Z" fill="#333"/><path d="M1291.1,942.8 L1301.9,942.8 L1296.5,937.4 Z" fill="#333"/><rect x="1351.3" y="943.9" width="9.7" height="8.9" fill="#333"/><path d="M1410,943.3 L1410,955.2 L1420.5,949.2 Z" fill="#2e2e2e"/><path d="M1465,942 h-2.2 v13 h2.2 M1474,942 h2.2 v13 h-2.2" fill="none" stroke="#222" stroke-width="2"/><circle cx="1467.8" cy="948.5" r="0.9" fill="#222"/><circle cx="1471.2" cy="948.5" r="0.9" fill="#222"/><path d="M1525.8,948.3 C1523,944.3 1518,944.3 1518,948.3 C1518,952.3 1523,952.3 1525.8,948.3 C1528.6,944.3 1533.6,944.3 1533.6,948.3 C1533.6,952.3 1528.6,952.3 1525.8,948.3 Z" fill="none" stroke="#2a2a2a" stroke-width="2.4"/><path d="M1577,949.5 A5.8,5.8 0 0 1 1586.5,943.8 M1588.4,947 A5.8,5.8 0 0 1 1579,952.8" fill="none" stroke="#2a2a2a" stroke-width="2.6"/><path d="M1584.2,940.8 L1589.6,941.6 L1587.6,946.6 Z M1581.2,955.8 L1575.8,955 L1577.8,950 Z" fill="#2a2a2a"/><path d="M1368,981 l-5,5.5 l5,5.5 M1373,981 l-5,5.5 l5,5.5" fill="none" stroke="#333" stroke-width="1.8"/><path d="M1628,981.5 l5,5.5 l-5,5.5 M1633,981.5 l5,5.5 l-5,5.5" fill="none" stroke="#333" stroke-width="1.8"/><text transform="translate(7.27,24.70) scale(1.1330,1)" font-size="13.24" fill="#ececec">History 1</text><text transform="translate(88.12,26.00)" font-size="15" fill="#9a9a9a">+</text><text transform="translate(1065.63,13.90) scale(1.0781,1)" font-size="12.14" fill="#eeeeee">X-Rite i1Pro 3</text><text transform="translate(1064.83,32.80) scale(1.1664,1)" font-size="12.00" fill="#eeeeee">Direct View</text><text transform="translate(1204.84,22.80) scale(1.1224,1)" font-size="10.61" fill="#ffffff">560</text><text transform="translate(1250.96,13.90) scale(1.1386,1)" font-size="12.14" fill="#eeeeee">Mobile Forge</text><text transform="translate(1420.97,13.90) scale(1.1272,1)" font-size="12.14" fill="#eeeeee">Direct Display Control</text><text transform="translate(7.52,124.80) scale(1.0399,1)" font-size="39.03" fill="#f2f2f2" stroke="#f2f2f2" stroke-width="0.45">Grayscale - Multi</text><text transform="translate(148.08,203.90) scale(0.9759,1)" font-size="14.90" fill="#d6d6d6">DeltaE 2000</text><text transform="translate(36.98,220.68) scale(1.0600,1)" font-size="13.9" fill="#d6d6d6">100</text><text transform="translate(20.40,231.63) scale(1.0600,1)" font-size="13.9" fill="#d6d6d6">95</text><text transform="translate(45.20,242.58) scale(1.0600,1)" font-size="13.9" fill="#d6d6d6">90</text><text transform="translate(20.40,253.53) scale(1.0600,1)" font-size="13.9" fill="#d6d6d6">85</text><text transform="translate(45.20,264.49) scale(1.0600,1)" font-size="13.9" fill="#d6d6d6">80</text><text transform="translate(20.40,275.44) scale(1.0600,1)" font-size="13.9" fill="#d6d6d6">75</text><text transform="translate(45.20,286.39) scale(1.0600,1)" font-size="13.9" fill="#d6d6d6">70</text><text transform="translate(20.40,297.34) scale(1.0600,1)" font-size="13.9" fill="#d6d6d6">65</text><text transform="translate(45.20,308.30) scale(1.0600,1)" font-size="13.9" fill="#d6d6d6">60</text><text transform="translate(20.40,319.25) scale(1.0600,1)" font-size="13.9" fill="#d6d6d6">55</text><text transform="translate(45.20,330.20) scale(1.0600,1)" font-size="13.9" fill="#d6d6d6">50</text><text transform="translate(20.40,341.15) scale(1.0600,1)" font-size="13.9" fill="#d6d6d6">45</text><text transform="translate(45.20,352.10) scale(1.0600,1)" font-size="13.9" fill="#d6d6d6">40</text><text transform="translate(20.40,363.06) scale(1.0600,1)" font-size="13.9" fill="#d6d6d6">35</text><text transform="translate(45.20,374.01) scale(1.0600,1)" font-size="13.9" fill="#d6d6d6">30</text><text transform="translate(20.40,384.96) scale(1.0600,1)" font-size="13.9" fill="#d6d6d6">25</text><text transform="translate(45.20,395.91) scale(1.0600,1)" font-size="13.9" fill="#d6d6d6">20</text><text transform="translate(20.40,406.87) scale(1.0600,1)" font-size="13.9" fill="#d6d6d6">15</text><text transform="translate(45.20,417.82) scale(1.0600,1)" font-size="13.9" fill="#d6d6d6">10</text><text transform="translate(28.61,428.77) scale(1.0600,1)" font-size="13.9" fill="#d6d6d6">5</text><text transform="translate(53.41,439.72) scale(1.0600,1)" font-size="13.9" fill="#d6d6d6">0</text><text transform="translate(63.38,460.90) scale(1.1000,1)" font-size="13.6" fill="#d6d6d6">0</text><text transform="translate(101.78,460.90) scale(1.1000,1)" font-size="13.6" fill="#d6d6d6">2</text><text transform="translate(140.18,460.90) scale(1.1000,1)" font-size="13.6" fill="#d6d6d6">4</text><text transform="translate(178.44,460.90) scale(1.1000,1)" font-size="13.6" fill="#d6d6d6">6</text><text transform="translate(216.97,460.90) scale(1.1000,1)" font-size="13.6" fill="#d6d6d6">8</text><text transform="translate(250.97,460.90) scale(1.1000,1)" font-size="13.6" fill="#d6d6d6">10</text><text transform="translate(289.51,460.90) scale(1.1000,1)" font-size="13.6" fill="#d6d6d6">12</text><text transform="translate(327.64,460.90) scale(1.1000,1)" font-size="13.6" fill="#d6d6d6">14</text><text transform="translate(653.68,115.60) scale(1.0218,1)" font-size="13.38" fill="#d6d6d6">RGB Balance</text><text transform="translate(403.10,445.10) scale(1.0600,1)" font-size="14.0" fill="#d6d6d6">80</text><text transform="translate(403.10,405.35) scale(1.0600,1)" font-size="14.0" fill="#d6d6d6">85</text><text transform="translate(403.10,365.60) scale(1.0600,1)" font-size="14.0" fill="#d6d6d6">90</text><text transform="translate(403.10,325.85) scale(1.0600,1)" font-size="14.0" fill="#d6d6d6">95</text><text transform="translate(394.88,286.10) scale(1.0600,1)" font-size="14.0" fill="#d6d6d6">100</text><text transform="translate(394.88,246.35) scale(1.0600,1)" font-size="14.0" fill="#d6d6d6">105</text><text transform="translate(395.94,206.60) scale(1.0600,1)" font-size="14.0" fill="#d6d6d6">110</text><text transform="translate(395.94,166.85) scale(1.0600,1)" font-size="14.0" fill="#d6d6d6">115</text><text transform="translate(394.88,127.10) scale(1.0600,1)" font-size="14.0" fill="#d6d6d6">120</text><text transform="translate(421.69,460.90) scale(1.0600,1)" font-size="14.0" fill="#d6d6d6">0</text><text transform="translate(474.32,460.90) scale(1.0600,1)" font-size="14.0" fill="#d6d6d6">10</text><text transform="translate(531.45,460.90) scale(1.0600,1)" font-size="14.0" fill="#d6d6d6">20</text><text transform="translate(588.59,460.90) scale(1.0600,1)" font-size="14.0" fill="#d6d6d6">30</text><text transform="translate(645.72,460.90) scale(1.0600,1)" font-size="14.0" fill="#d6d6d6">40</text><text transform="translate(702.59,460.90) scale(1.0600,1)" font-size="14.0" fill="#d6d6d6">50</text><text transform="translate(759.45,460.90) scale(1.0600,1)" font-size="14.0" fill="#d6d6d6">60</text><text transform="translate(816.45,460.90) scale(1.0600,1)" font-size="14.0" fill="#d6d6d6">70</text><text transform="translate(873.59,460.90) scale(1.0600,1)" font-size="14.0" fill="#d6d6d6">80</text><text transform="translate(930.45,460.90) scale(1.0600,1)" font-size="14.0" fill="#d6d6d6">90</text><text transform="translate(983.21,460.90) scale(1.0600,1)" font-size="14.0" fill="#d6d6d6">100</text><text transform="translate(1065.48,115.60) scale(1.0168,1)" font-size="13.38" fill="#d6d6d6">RGB Balance</text><text transform="translate(1037.40,449.80) scale(1.0600,1)" font-size="14.0" fill="#d6d6d6">90</text><text transform="translate(1037.40,369.05) scale(1.0600,1)" font-size="14.0" fill="#d6d6d6">95</text><text transform="translate(1029.18,288.30) scale(1.0600,1)" font-size="14.0" fill="#d6d6d6">100</text><text transform="translate(1029.18,207.55) scale(1.0600,1)" font-size="14.0" fill="#d6d6d6">105</text><text transform="translate(1030.25,126.80) scale(1.0600,1)" font-size="14.0" fill="#d6d6d6">110</text><text transform="translate(1109.71,460.90) scale(1.0600,1)" font-size="14.0" fill="#d6d6d6">100</text><text transform="translate(1375.98,115.80) scale(1.0929,1)" font-size="13.52" fill="#d6d6d6">Gamma Log/Log</text><text transform="translate(1217.86,443.90) scale(1.0600,1)" font-size="14.0" fill="#d6d6d6">1,8</text><text transform="translate(1230.58,381.40) scale(1.0600,1)" font-size="14.0" fill="#d6d6d6">2</text><text transform="translate(1218.12,317.50) scale(1.0600,1)" font-size="14.0" fill="#d6d6d6">2,2</text><text transform="translate(1217.60,253.30) scale(1.0600,1)" font-size="14.0" fill="#d6d6d6">2,4</text><text transform="translate(1217.86,191.00) scale(1.0600,1)" font-size="14.0" fill="#d6d6d6">2,6</text><text transform="translate(1217.86,126.80) scale(1.0600,1)" font-size="14.0" fill="#d6d6d6">2,8</text><text transform="translate(1240.69,460.90) scale(1.0600,1)" font-size="14.0" fill="#d6d6d6">0</text><text transform="translate(1316.05,460.90) scale(1.0600,1)" font-size="14.0" fill="#d6d6d6">20</text><text transform="translate(1395.92,460.90) scale(1.0600,1)" font-size="14.0" fill="#d6d6d6">40</text><text transform="translate(1475.25,460.90) scale(1.0600,1)" font-size="14.0" fill="#d6d6d6">60</text><text transform="translate(1554.99,460.90) scale(1.0600,1)" font-size="14.0" fill="#d6d6d6">80</text><text transform="translate(1630.21,460.90) scale(1.0600,1)" font-size="14.0" fill="#d6d6d6">100</text><text transform="translate(99.20,501.90) scale(1.0143,1)" font-size="29.10" fill="#f0f0f0" stroke="#f0f0f0" stroke-width="0.45">Avg dE2000: 8</text><text transform="translate(498.20,502.10) scale(0.9216,1)" font-size="30.68" fill="#f0f0f0" stroke="#f0f0f0" stroke-width="0.45">Avg CCT: 8922</text><text transform="translate(880.54,501.90) scale(1.0402,1)" font-size="28.97" fill="#f0f0f0" stroke="#f0f0f0" stroke-width="0.45">Contrast Ratio: 843</text><text transform="translate(1273.20,502.30) scale(0.9915,1)" font-size="30.11" fill="#f0f0f0" stroke="#f0f0f0" stroke-width="0.45">Average Gamma: 2,007</text><text transform="translate(141.85,643.90)" font-size="12.6" fill="#f0f0f0">0</text><text transform="translate(215.85,643.90)" font-size="12.6" fill="#f0f0f0">5</text><text transform="translate(285.10,643.90)" font-size="12.6" fill="#f0f0f0">10</text><text transform="translate(359.10,643.90)" font-size="12.6" fill="#f0f0f0">15</text><text transform="translate(432.35,643.90)" font-size="12.6" fill="#f0f0f0">20</text><text transform="translate(506.35,643.90)" font-size="12.6" fill="#f0f0f0">25</text><text transform="translate(580.35,643.90)" font-size="12.6" fill="#f0f0f0">30</text><text transform="translate(653.35,643.90)" font-size="12.6" fill="#f0f0f0">35</text><text transform="translate(727.48,643.90)" font-size="12.6" fill="#f0f0f0">40</text><text transform="translate(800.48,643.90)" font-size="12.6" fill="#f0f0f0">45</text><text transform="translate(874.35,643.90)" font-size="12.6" fill="#f0f0f0">50</text><text transform="translate(948.35,643.90)" font-size="12.6" fill="#f0f0f0">55</text><text transform="translate(1021.35,643.90)" font-size="12.6" fill="#f0f0f0">60</text><text transform="translate(1095.35,643.90)" font-size="12.6" fill="#f0f0f0">65</text><text transform="translate(1168.35,643.90)" font-size="12.6" fill="#f0f0f0">70</text><text transform="translate(1242.35,643.90)" font-size="12.6" fill="#f0f0f0">75</text><text transform="translate(1316.35,643.90)" font-size="12.6" fill="#f0f0f0">80</text><text transform="translate(1389.35,643.90)" font-size="12.6" fill="#f0f0f0">85</text><text transform="translate(1463.35,643.90)" font-size="12.6" fill="#f0f0f0">90</text><text transform="translate(1536.35,643.90)" font-size="12.6" fill="#f0f0f0">95</text><text transform="translate(1606.60,643.90)" font-size="12.6" fill="#f0f0f0">100</text><text transform="translate(109.6,567.7) rotate(-90)" font-size="12.4" fill="#e8e8e8" textLength="35" lengthAdjust="spacingAndGlyphs">Actual</text><text transform="translate(109.6,624.5) rotate(-90)" font-size="12.4" fill="#e8e8e8" textLength="34.2" lengthAdjust="spacingAndGlyphs">Target</text><text transform="translate(20.93,719.80) scale(1.0984,1)" font-size="27.45" fill="#f0f0f0" stroke="#f0f0f0" stroke-width="0.45">Current Reading</text><text transform="translate(21.75,761.50) scale(1.0149,1)" font-size="24.80" fill="#f0f0f0" stroke="#f0f0f0" stroke-width="0.45">x: 0,2868</text><text transform="translate(171.90,761.50) scale(1.0154,1)" font-size="24.80" fill="#f0f0f0" stroke="#f0f0f0" stroke-width="0.45">y: 0,3106</text><text transform="translate(20.45,795.40) scale(1.0329,1)" font-size="25.23" fill="#f0f0f0" stroke="#f0f0f0" stroke-width="0.45">u': 0,1864</text><text transform="translate(171.90,795.40) scale(1.0042,1)" font-size="25.23" fill="#f0f0f0" stroke="#f0f0f0" stroke-width="0.45">v': 0,4543</text><text transform="translate(20.87,829.10) scale(1.1270,1)" font-size="23.31" fill="#f0f0f0" stroke="#f0f0f0" stroke-width="0.45">cd/m²: 267,4251</text><text transform="translate(21.24,862.90) scale(1.0132,1)" font-size="24.23" fill="#f0f0f0" stroke="#f0f0f0" stroke-width="0.45">ΔE 2000: 10,6</text><text transform="translate(339.14,858.10) scale(1.0400,1)" font-size="14.0" fill="#d6d6d6">0,3</text><text transform="translate(429.16,877.70) scale(1.0400,1)" font-size="14.0" fill="#d6d6d6">0,3</text><text transform="translate(331.34,804.75) scale(1.0400,1)" font-size="14.0" fill="#d6d6d6">0,32</text><text transform="translate(506.86,877.70) scale(1.0400,1)" font-size="14.0" fill="#d6d6d6">0,32</text><text transform="translate(330.82,751.40) scale(1.0400,1)" font-size="14.0" fill="#d6d6d6">0,34</text><text transform="translate(588.20,877.70) scale(1.0400,1)" font-size="14.0" fill="#d6d6d6">0,34</text><text transform="translate(436.30,686.40) scale(0.9346,1)" font-size="14.77" fill="#d6d6d6">CIE 1931 xy</text><g clip-path="url(#tclip)"><text transform="translate(776.60,679.90)" font-size="12.4" fill="#f2f2f2" font-weight="bold">0</text><text transform="translate(831.92,679.90)" font-size="12.4" fill="#f2f2f2" font-weight="bold">5</text><text transform="translate(879.93,679.90)" font-size="12.4" fill="#f2f2f2" font-weight="bold">10</text><text transform="translate(931.58,679.90)" font-size="12.4" fill="#f2f2f2" font-weight="bold">15</text><text transform="translate(983.34,679.90)" font-size="12.4" fill="#f2f2f2" font-weight="bold">20</text><text transform="translate(1034.98,679.90)" font-size="12.4" fill="#f2f2f2" font-weight="bold">25</text><text transform="translate(1086.74,679.90)" font-size="12.4" fill="#f2f2f2" font-weight="bold">30</text><text transform="translate(1138.38,679.90)" font-size="12.4" fill="#f2f2f2" font-weight="bold">35</text><text transform="translate(1190.03,679.90)" font-size="12.4" fill="#f2f2f2" font-weight="bold">40</text><text transform="translate(1241.66,679.90)" font-size="12.4" fill="#f2f2f2" font-weight="bold">45</text><text transform="translate(1293.18,679.90)" font-size="12.4" fill="#f2f2f2" font-weight="bold">50</text><text transform="translate(1344.82,679.90)" font-size="12.4" fill="#f2f2f2" font-weight="bold">55</text><text transform="translate(1396.46,679.90)" font-size="12.4" fill="#f2f2f2" font-weight="bold">60</text><text transform="translate(1448.10,679.90)" font-size="12.4" fill="#f2f2f2" font-weight="bold">65</text><text transform="translate(1499.74,679.90)" font-size="12.4" fill="#f2f2f2" font-weight="bold">70</text><text transform="translate(1551.38,679.90)" font-size="12.4" fill="#f2f2f2" font-weight="bold">75</text><text transform="translate(1603.02,679.90)" font-size="12.4" fill="#f2f2f2" font-weight="bold">80</text><text transform="translate(1654.66,679.90)" font-size="12.4" fill="#f2f2f2" font-weight="bold">85</text><text transform="translate(637.70,704.60) scale(0.8154,1)" font-size="14.91" fill="#f4f4f4" font-weight="bold">x: CIE31</text><text transform="translate(753.17,704.60) scale(0.8600,1)" font-size="14.2" fill="#eeeeee">0,28</text><text transform="translate(812.17,704.60) scale(0.8600,1)" font-size="14.2" fill="#eeeeee">0,28</text><text transform="translate(863.81,704.60) scale(0.8600,1)" font-size="14.2" fill="#eeeeee">0,28</text><text transform="translate(915.45,704.60) scale(0.8600,1)" font-size="14.2" fill="#eeeeee">0,28</text><text transform="translate(967.09,704.60) scale(0.8600,1)" font-size="14.2" fill="#eeeeee">0,28</text><text transform="translate(1018.73,704.60) scale(0.8600,1)" font-size="14.2" fill="#eeeeee">0,28</text><text transform="translate(1070.37,704.60) scale(0.8600,1)" font-size="14.2" fill="#eeeeee">0,28</text><text transform="translate(1122.01,704.60) scale(0.8600,1)" font-size="14.2" fill="#eeeeee">0,28</text><text transform="translate(1173.65,704.60) scale(0.8600,1)" font-size="14.2" fill="#eeeeee">0,28</text><text transform="translate(1225.29,704.60) scale(0.8600,1)" font-size="14.2" fill="#eeeeee">0,28</text><text transform="translate(1276.93,704.60) scale(0.8600,1)" font-size="14.2" fill="#eeeeee">0,28</text><text transform="translate(1328.57,704.60) scale(0.8600,1)" font-size="14.2" fill="#eeeeee">0,28</text><text transform="translate(1380.21,704.60) scale(0.8600,1)" font-size="14.2" fill="#eeeeee">0,28</text><text transform="translate(1431.85,704.60) scale(0.8600,1)" font-size="14.2" fill="#eeeeee">0,28</text><text transform="translate(1483.49,704.60) scale(0.8600,1)" font-size="14.2" fill="#eeeeee">0,28</text><text transform="translate(1535.13,704.60) scale(0.8600,1)" font-size="14.2" fill="#eeeeee">0,28</text><text transform="translate(1586.77,704.60) scale(0.8600,1)" font-size="14.2" fill="#eeeeee">0,28</text><text transform="translate(1638.41,704.60) scale(0.8600,1)" font-size="14.2" fill="#eeeeee">0,28</text><text transform="translate(637.70,727.94) scale(0.8154,1)" font-size="14.91" fill="#f4f4f4" font-weight="bold">y: CIE31</text><text transform="translate(753.17,727.94) scale(0.8600,1)" font-size="14.2" fill="#eeeeee">0,27</text><text transform="translate(812.17,727.94) scale(0.8600,1)" font-size="14.2" fill="#eeeeee">0,29</text><text transform="translate(863.81,727.94) scale(0.8600,1)" font-size="14.2" fill="#eeeeee">0,30</text><text transform="translate(915.45,727.94) scale(0.8600,1)" font-size="14.2" fill="#eeeeee">0,30</text><text transform="translate(967.09,727.94) scale(0.8600,1)" font-size="14.2" fill="#eeeeee">0,30</text><text transform="translate(1018.73,727.94) scale(0.8600,1)" font-size="14.2" fill="#eeeeee">0,30</text><text transform="translate(1070.37,727.94) scale(0.8600,1)" font-size="14.2" fill="#eeeeee">0,30</text><text transform="translate(1122.01,727.94) scale(0.8600,1)" font-size="14.2" fill="#eeeeee">0,30</text><text transform="translate(1173.65,727.94) scale(0.8600,1)" font-size="14.2" fill="#eeeeee">0,30</text><text transform="translate(1225.29,727.94) scale(0.8600,1)" font-size="14.2" fill="#eeeeee">0,30</text><text transform="translate(1276.93,727.94) scale(0.8600,1)" font-size="14.2" fill="#eeeeee">0,30</text><text transform="translate(1328.57,727.94) scale(0.8600,1)" font-size="14.2" fill="#eeeeee">0,31</text><text transform="translate(1380.21,727.94) scale(0.8600,1)" font-size="14.2" fill="#eeeeee">0,31</text><text transform="translate(1431.85,727.94) scale(0.8600,1)" font-size="14.2" fill="#eeeeee">0,31</text><text transform="translate(1483.49,727.94) scale(0.8600,1)" font-size="14.2" fill="#eeeeee">0,31</text><text transform="translate(1535.13,727.94) scale(0.8600,1)" font-size="14.2" fill="#eeeeee">0,31</text><text transform="translate(1586.77,727.94) scale(0.8600,1)" font-size="14.2" fill="#eeeeee">0,31</text><text transform="translate(1638.41,727.94) scale(0.8600,1)" font-size="14.2" fill="#eeeeee">0,31</text><text transform="translate(637.71,751.28) scale(0.7692,1)" font-size="15.13" fill="#f4f4f4" font-weight="bold">Y</text><text transform="translate(753.17,751.28) scale(0.8600,1)" font-size="14.2" fill="#eeeeee">0,32</text><text transform="translate(812.17,751.28) scale(0.8600,1)" font-size="14.2" fill="#eeeeee">0,89</text><text transform="translate(863.60,751.28) scale(0.8600,1)" font-size="14.2" fill="#eeeeee">2,82</text><text transform="translate(915.45,751.28) scale(0.8600,1)" font-size="14.2" fill="#eeeeee">5,79</text><text transform="translate(966.66,751.28) scale(0.8600,1)" font-size="14.2" fill="#eeeeee">10,70</text><text transform="translate(1018.30,751.28) scale(0.8600,1)" font-size="14.2" fill="#eeeeee">16,30</text><text transform="translate(1070.15,751.28) scale(0.8600,1)" font-size="14.2" fill="#eeeeee">23,60</text><text transform="translate(1122.01,751.28) scale(0.8600,1)" font-size="14.2" fill="#eeeeee">32,11</text><text transform="translate(1173.87,751.28) scale(0.8600,1)" font-size="14.2" fill="#eeeeee">42,48</text><text transform="translate(1225.29,751.28) scale(0.8600,1)" font-size="14.2" fill="#eeeeee">53,61</text><text transform="translate(1276.72,751.28) scale(0.8600,1)" font-size="14.2" fill="#eeeeee">66,16</text><text transform="translate(1328.57,751.28) scale(0.8600,1)" font-size="14.2" fill="#eeeeee">80,77</text><text transform="translate(1379.99,751.28) scale(0.8600,1)" font-size="14.2" fill="#eeeeee">96,70</text><text transform="translate(1431.42,751.28) scale(0.8600,1)" font-size="14.2" fill="#eeeeee">114,04</text><text transform="translate(1483.06,751.28) scale(0.8600,1)" font-size="14.2" fill="#eeeeee">130,03</text><text transform="translate(1534.70,751.28) scale(0.8600,1)" font-size="14.2" fill="#eeeeee">150,15</text><text transform="translate(1586.34,751.28) scale(0.8600,1)" font-size="14.2" fill="#eeeeee">169,96</text><text transform="translate(1637.98,751.28) scale(0.8600,1)" font-size="14.2" fill="#eeeeee">193,40</text><text transform="translate(637.69,774.62) scale(0.8506,1)" font-size="15.13" fill="#f4f4f4" font-weight="bold">Target Y</text><text transform="translate(753.17,774.62) scale(0.8600,1)" font-size="14.2" fill="#eeeeee">0,00</text><text transform="translate(811.74,774.62) scale(0.8600,1)" font-size="14.2" fill="#eeeeee">1,08</text><text transform="translate(863.60,774.62) scale(0.8600,1)" font-size="14.2" fill="#eeeeee">2,76</text><text transform="translate(915.45,774.62) scale(0.8600,1)" font-size="14.2" fill="#eeeeee">5,18</text><text transform="translate(967.09,774.62) scale(0.8600,1)" font-size="14.2" fill="#eeeeee">8,85</text><text transform="translate(1018.30,774.62) scale(0.8600,1)" font-size="14.2" fill="#eeeeee">13,71</text><text transform="translate(1069.94,774.62) scale(0.8600,1)" font-size="14.2" fill="#eeeeee">19,33</text><text transform="translate(1121.80,774.62) scale(0.8600,1)" font-size="14.2" fill="#eeeeee">26,72</text><text transform="translate(1173.65,774.62) scale(0.8600,1)" font-size="14.2" fill="#eeeeee">35,53</text><text transform="translate(1225.51,774.62) scale(0.8600,1)" font-size="14.2" fill="#eeeeee">45,85</text><text transform="translate(1276.93,774.62) scale(0.8600,1)" font-size="14.2" fill="#eeeeee">57,73</text><text transform="translate(1328.36,774.62) scale(0.8600,1)" font-size="14.2" fill="#eeeeee">70,13</text><text transform="translate(1380.21,774.62) scale(0.8600,1)" font-size="14.2" fill="#eeeeee">85,19</text><text transform="translate(1431.42,774.62) scale(0.8600,1)" font-size="14.2" fill="#eeeeee">101,98</text><text transform="translate(1483.06,774.62) scale(0.8600,1)" font-size="14.2" fill="#eeeeee">119,06</text><text transform="translate(1534.70,774.62) scale(0.8600,1)" font-size="14.2" fill="#eeeeee">139,33</text><text transform="translate(1586.34,774.62) scale(0.8600,1)" font-size="14.2" fill="#eeeeee">161,48</text><text transform="translate(1637.98,774.62) scale(0.8600,1)" font-size="14.2" fill="#eeeeee">185,60</text><text transform="translate(637.44,797.96) scale(0.9198,1)" font-size="14.34" fill="#f4f4f4" font-weight="bold">Gamma Log/Log</text><text transform="translate(752.74,797.96) scale(0.8600,1)" font-size="14.2" fill="#eeeeee">1,28</text><text transform="translate(811.74,797.96) scale(0.8600,1)" font-size="14.2" fill="#eeeeee">1,92</text><text transform="translate(863.38,797.96) scale(0.8600,1)" font-size="14.2" fill="#eeeeee">1,99</text><text transform="translate(915.24,797.96) scale(0.8600,1)" font-size="14.2" fill="#eeeeee">2,01</text><text transform="translate(966.88,797.96) scale(0.8600,1)" font-size="14.2" fill="#eeeeee">2,00</text><text transform="translate(1018.52,797.96) scale(0.8600,1)" font-size="14.2" fill="#eeeeee">2,02</text><text transform="translate(1070.15,797.96) scale(0.8600,1)" font-size="14.2" fill="#eeeeee">2,01</text><text transform="translate(1121.80,797.96) scale(0.8600,1)" font-size="14.2" fill="#eeeeee">2,01</text><text transform="translate(1173.43,797.96) scale(0.8600,1)" font-size="14.2" fill="#eeeeee">2,01</text><text transform="translate(1225.08,797.96) scale(0.8600,1)" font-size="14.2" fill="#eeeeee">2,02</text><text transform="translate(1276.72,797.96) scale(0.8600,1)" font-size="14.2" fill="#eeeeee">2,03</text><text transform="translate(1328.36,797.96) scale(0.8600,1)" font-size="14.2" fill="#eeeeee">2,00</text><text transform="translate(1379.78,797.96) scale(0.8600,1)" font-size="14.2" fill="#eeeeee">1,99</text><text transform="translate(1431.42,797.96) scale(0.8600,1)" font-size="14.2" fill="#eeeeee">1,99</text><text transform="translate(1483.28,797.96) scale(0.8600,1)" font-size="14.2" fill="#eeeeee">2,01</text><text transform="translate(1534.91,797.96) scale(0.8600,1)" font-size="14.2" fill="#eeeeee">2,00</text><text transform="translate(1586.56,797.96) scale(0.8600,1)" font-size="14.2" fill="#eeeeee">2,03</text><text transform="translate(1638.20,797.96) scale(0.8600,1)" font-size="14.2" fill="#eeeeee">2,00</text><text transform="translate(637.51,821.30) scale(0.7736,1)" font-size="14.91" fill="#f4f4f4" font-weight="bold">CCT</text><text transform="translate(752.74,821.30) scale(0.8600,1)" font-size="14.2" fill="#eeeeee">11690,00</text><text transform="translate(811.96,821.30) scale(0.8600,1)" font-size="14.2" fill="#eeeeee">9712,00</text><text transform="translate(863.60,821.30) scale(0.8600,1)" font-size="14.2" fill="#eeeeee">9029,00</text><text transform="translate(915.45,821.30) scale(0.8600,1)" font-size="14.2" fill="#eeeeee">8952,00</text><text transform="translate(967.09,821.30) scale(0.8600,1)" font-size="14.2" fill="#eeeeee">8941,00</text><text transform="translate(1018.73,821.30) scale(0.8600,1)" font-size="14.2" fill="#eeeeee">8963,00</text><text transform="translate(1070.37,821.30) scale(0.8600,1)" font-size="14.2" fill="#eeeeee">8977,00</text><text transform="translate(1122.01,821.30) scale(0.8600,1)" font-size="14.2" fill="#eeeeee">8979,00</text><text transform="translate(1173.65,821.30) scale(0.8600,1)" font-size="14.2" fill="#eeeeee">8978,00</text><text transform="translate(1225.29,821.30) scale(0.8600,1)" font-size="14.2" fill="#eeeeee">8982,00</text><text transform="translate(1276.93,821.30) scale(0.8600,1)" font-size="14.2" fill="#eeeeee">8969,00</text><text transform="translate(1328.57,821.30) scale(0.8600,1)" font-size="14.2" fill="#eeeeee">8950,00</text><text transform="translate(1380.21,821.30) scale(0.8600,1)" font-size="14.2" fill="#eeeeee">8927,00</text><text transform="translate(1431.85,821.30) scale(0.8600,1)" font-size="14.2" fill="#eeeeee">8901,00</text><text transform="translate(1483.49,821.30) scale(0.8600,1)" font-size="14.2" fill="#eeeeee">8879,00</text><text transform="translate(1535.13,821.30) scale(0.8600,1)" font-size="14.2" fill="#eeeeee">8846,00</text><text transform="translate(1586.77,821.30) scale(0.8600,1)" font-size="14.2" fill="#eeeeee">8815,00</text><text transform="translate(1638.41,821.30) scale(0.8600,1)" font-size="14.2" fill="#eeeeee">8770,00</text><text transform="translate(637.47,844.64) scale(0.8681,1)" font-size="14.91" fill="#f4f4f4" font-weight="bold">ΔE 2000</text><text transform="translate(752.74,844.64) scale(0.8600,1)" font-size="14.2" fill="#eeeeee">1,41</text><text transform="translate(811.74,844.64) scale(0.8600,1)" font-size="14.2" fill="#eeeeee">1,82</text><text transform="translate(863.81,844.64) scale(0.8600,1)" font-size="14.2" fill="#eeeeee">3,34</text><text transform="translate(915.66,844.64) scale(0.8600,1)" font-size="14.2" fill="#eeeeee">4,11</text><text transform="translate(967.09,844.64) scale(0.8600,1)" font-size="14.2" fill="#eeeeee">5,14</text><text transform="translate(1018.73,844.64) scale(0.8600,1)" font-size="14.2" fill="#eeeeee">5,85</text><text transform="translate(1070.15,844.64) scale(0.8600,1)" font-size="14.2" fill="#eeeeee">6,73</text><text transform="translate(1121.80,844.64) scale(0.8600,1)" font-size="14.2" fill="#eeeeee">7,37</text><text transform="translate(1173.65,844.64) scale(0.8600,1)" font-size="14.2" fill="#eeeeee">8,06</text><text transform="translate(1225.29,844.64) scale(0.8600,1)" font-size="14.2" fill="#eeeeee">8,52</text><text transform="translate(1276.93,844.64) scale(0.8600,1)" font-size="14.2" fill="#eeeeee">8,77</text><text transform="translate(1328.36,844.64) scale(0.8600,1)" font-size="14.2" fill="#eeeeee">9,20</text><text transform="translate(1379.99,844.64) scale(0.8600,1)" font-size="14.2" fill="#eeeeee">9,45</text><text transform="translate(1431.64,844.64) scale(0.8600,1)" font-size="14.2" fill="#eeeeee">9,70</text><text transform="translate(1483.28,844.64) scale(0.8600,1)" font-size="14.2" fill="#eeeeee">9,85</text><text transform="translate(1534.70,844.64) scale(0.8600,1)" font-size="14.2" fill="#eeeeee">10,09</text><text transform="translate(1586.34,844.64) scale(0.8600,1)" font-size="14.2" fill="#eeeeee">10,27</text><text transform="translate(1637.98,844.64) scale(0.8600,1)" font-size="14.2" fill="#eeeeee">10,55</text><text transform="translate(637.48,867.98) scale(0.8332,1)" font-size="15.13" fill="#f4f4f4" font-weight="bold">ΔE ITP</text><text transform="translate(752.96,867.98) scale(0.8600,1)" font-size="14.2" fill="#eeeeee">72,63</text><text transform="translate(811.74,867.98) scale(0.8600,1)" font-size="14.2" fill="#eeeeee">11,57</text><text transform="translate(863.38,867.98) scale(0.8600,1)" font-size="14.2" fill="#eeeeee">10,79</text><text transform="translate(915.02,867.98) scale(0.8600,1)" font-size="14.2" fill="#eeeeee">13,55</text><text transform="translate(966.66,867.98) scale(0.8600,1)" font-size="14.2" fill="#eeeeee">17,28</text><text transform="translate(1018.30,867.98) scale(0.8600,1)" font-size="14.2" fill="#eeeeee">17,80</text><text transform="translate(1069.94,867.98) scale(0.8600,1)" font-size="14.2" fill="#eeeeee">19,70</text><text transform="translate(1121.58,867.98) scale(0.8600,1)" font-size="14.2" fill="#eeeeee">19,75</text><text transform="translate(1173.43,867.98) scale(0.8600,1)" font-size="14.2" fill="#eeeeee">20,09</text><text transform="translate(1224.86,867.98) scale(0.8600,1)" font-size="14.2" fill="#eeeeee">19,67</text><text transform="translate(1276.50,867.98) scale(0.8600,1)" font-size="14.2" fill="#eeeeee">19,24</text><text transform="translate(1328.14,867.98) scale(0.8600,1)" font-size="14.2" fill="#eeeeee">19,65</text><text transform="translate(1379.78,867.98) scale(0.8600,1)" font-size="14.2" fill="#eeeeee">19,29</text><text transform="translate(1431.42,867.98) scale(0.8600,1)" font-size="14.2" fill="#eeeeee">18,90</text><text transform="translate(1483.06,867.98) scale(0.8600,1)" font-size="14.2" fill="#eeeeee">18,27</text><text transform="translate(1534.70,867.98) scale(0.8600,1)" font-size="14.2" fill="#eeeeee">17,94</text><text transform="translate(1586.34,867.98) scale(0.8600,1)" font-size="14.2" fill="#eeeeee">17,44</text><text transform="translate(1637.98,867.98) scale(0.8600,1)" font-size="14.2" fill="#eeeeee">17,21</text></g><text transform="translate(56.78,984.50)" font-size="12.6" fill="#2a2a2a" font-weight="bold">10</text><text transform="translate(121.78,984.50)" font-size="12.6" fill="#2a2a2a" font-weight="bold">15</text><text transform="translate(186.90,984.50)" font-size="12.6" fill="#2a2a2a" font-weight="bold">20</text><text transform="translate(251.90,984.50)" font-size="12.6" fill="#2a2a2a" font-weight="bold">25</text><text transform="translate(317.02,984.50)" font-size="12.6" fill="#2a2a2a" font-weight="bold">30</text><text transform="translate(382.02,984.50)" font-size="12.6" fill="#2a2a2a" font-weight="bold">35</text><text transform="translate(447.02,984.50)" font-size="12.6" fill="#2a2a2a" font-weight="bold">40</text><text transform="translate(512.02,984.50)" font-size="12.6" fill="#2a2a2a" font-weight="bold">45</text><text transform="translate(576.90,984.50)" font-size="12.6" fill="#2a2a2a" font-weight="bold">50</text><text transform="translate(641.90,984.50)" font-size="12.6" fill="#2a2a2a" font-weight="bold">55</text><text transform="translate(706.90,984.50)" font-size="12.6" fill="#2a2a2a" font-weight="bold">60</text><text transform="translate(771.90,984.50)" font-size="12.6" fill="#2a2a2a" font-weight="bold">65</text><text transform="translate(836.90,984.50)" font-size="12.6" fill="#2a2a2a" font-weight="bold">70</text><text transform="translate(901.90,984.50)" font-size="12.6" fill="#2a2a2a" font-weight="bold">75</text><text transform="translate(966.90,984.50)" font-size="12.6" fill="#2a2a2a" font-weight="bold">80</text><text transform="translate(1031.90,984.50)" font-size="12.6" fill="#2a2a2a" font-weight="bold">85</text><text transform="translate(1096.90,984.50)" font-size="12.6" fill="#2a2a2a" font-weight="bold">90</text><text transform="translate(1161.90,984.50)" font-size="12.6" fill="#2a2a2a" font-weight="bold">95</text><text transform="translate(1223.28,984.50)" font-size="12.6" fill="#ffffff" font-weight="bold">100</text><text transform="translate(1398.25,996.70) scale(1.0000,1)" font-size="26.76" fill="#343434" font-weight="bold">Back</text><text transform="translate(1531.17,997.00) scale(1.0661,1)" font-size="28.95" fill="#343434" font-weight="bold">Next</text></svg>
</body></html>
